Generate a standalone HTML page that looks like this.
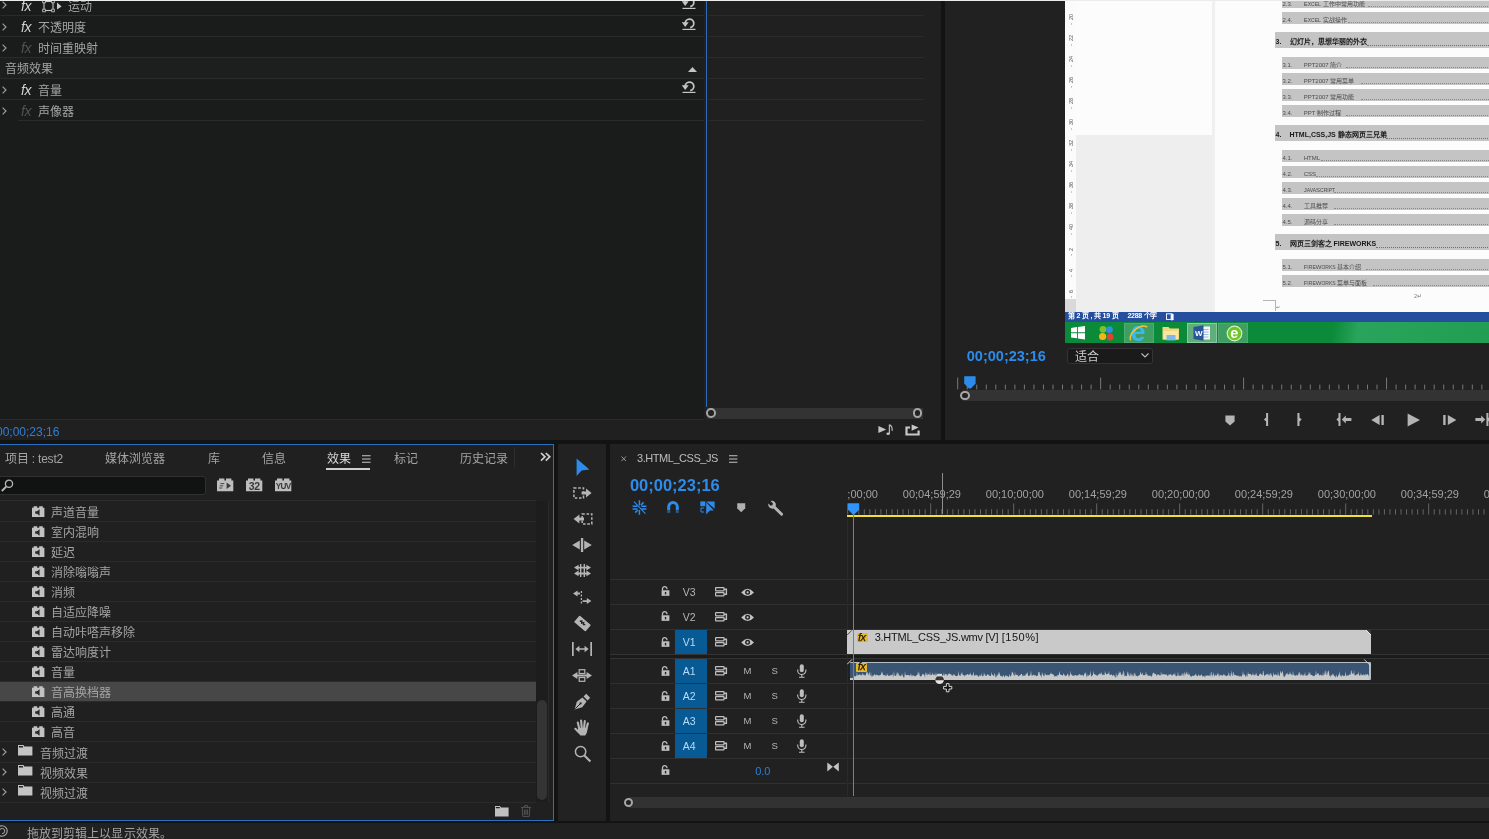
<!DOCTYPE html>
<html lang="zh-CN"><head><meta charset="utf-8"><title>Premiere Pro</title>
<style>
html,body{margin:0;padding:0}
body{width:1489px;height:839px;overflow:hidden;background:#111412;position:relative;font-family:"Liberation Sans",sans-serif}
body div,body svg{position:absolute;display:block}
.t{white-space:nowrap;font-family:"Liberation Sans",sans-serif}
.sc{font-size:84%;position:static}
#vid div,#vid svg{position:absolute}
</style></head><body><div id="root" style="left:0;top:0;width:1489px;height:839px;will-change:transform;overflow:hidden">
<div style="left:0px;top:0px;width:941px;height:440px;background:#202020;"></div>
<div style="left:0px;top:0px;width:704px;height:419px;background:#191c1a;"></div>
<div style="left:0px;top:58px;width:704px;height:20px;background:#1d1e1e;"></div>
<div style="left:0px;top:419px;width:941px;height:21px;background:#212021;"></div>
<div style="left:0px;top:419px;width:704px;height:1px;background:#2b2b2b;"></div>
<div style="left:0px;top:15px;width:704px;height:1px;background:#282b29;"></div>
<div style="left:708px;top:15px;width:216px;height:1px;background:#2b2b2b;"></div>
<div style="left:0px;top:36px;width:704px;height:1px;background:#282b29;"></div>
<div style="left:708px;top:36px;width:216px;height:1px;background:#2b2b2b;"></div>
<div style="left:0px;top:57px;width:704px;height:1px;background:#282b29;"></div>
<div style="left:708px;top:57px;width:216px;height:1px;background:#2b2b2b;"></div>
<div style="left:0px;top:78px;width:704px;height:1px;background:#282b29;"></div>
<div style="left:708px;top:78px;width:216px;height:1px;background:#2b2b2b;"></div>
<div style="left:0px;top:99px;width:704px;height:1px;background:#282b29;"></div>
<div style="left:708px;top:99px;width:216px;height:1px;background:#2b2b2b;"></div>
<div style="left:18px;top:120px;width:686px;height:1px;background:#282b29;"></div>
<div style="left:708px;top:120px;width:216px;height:1px;background:#2b2b2b;"></div>
<div style="left:706.2px;top:1px;width:1.2px;height:405.5px;background:#2c6cba;"></div>
<svg style="left:2.1px;top:1.0px;" width="6" height="8" viewBox="0 0 6 8"><polyline points="0.6,0.6 4,4 0.6,7.4" fill="none" stroke="#9c9c9c" stroke-width="1.2"/></svg>
<div class="t" style="left:21px;top:-4.5px;height:20px;line-height:20px;font-size:14px;font-style:italic;color:#cfcfcf;letter-spacing:-0.5px">fx</div>
<div class="t" style="left:68px;top:-3.5px;height:20px;line-height:20px;font-size:12px;color:#a4a4a4;">运动</div>
<svg style="left:42.4px;top:-0.2px;" width="22" height="14" viewBox="0 0 22 14"><rect x="2" y="1.5" width="9" height="9" fill="none" stroke="#c8c8c8" stroke-width="1.1"/><rect x="0.7" y="0.2" width="2.6" height="2.6" fill="#1a1d1b" stroke="#c8c8c8" stroke-width="0.8"/><rect x="9.7" y="0.2" width="2.6" height="2.6" fill="#1a1d1b" stroke="#c8c8c8" stroke-width="0.8"/><rect x="0.7" y="9.2" width="2.6" height="2.6" fill="#1a1d1b" stroke="#c8c8c8" stroke-width="0.8"/><rect x="9.7" y="9.2" width="2.6" height="2.6" fill="#1a1d1b" stroke="#c8c8c8" stroke-width="0.8"/><path d="M15 2.5 L19.6 6.5 L15 9.5 Z" fill="#c8c8c8"/></svg>
<svg style="left:2.1px;top:22.5px;" width="6" height="8" viewBox="0 0 6 8"><polyline points="0.6,0.6 4,4 0.6,7.4" fill="none" stroke="#9c9c9c" stroke-width="1.2"/></svg>
<div class="t" style="left:21px;top:17px;height:20px;line-height:20px;font-size:14px;font-style:italic;color:#cfcfcf;letter-spacing:-0.5px">fx</div>
<div class="t" style="left:38px;top:18px;height:20px;line-height:20px;font-size:12px;color:#a4a4a4;">不透明度</div>
<svg style="left:2.1px;top:43.5px;" width="6" height="8" viewBox="0 0 6 8"><polyline points="0.6,0.6 4,4 0.6,7.4" fill="none" stroke="#9c9c9c" stroke-width="1.2"/></svg>
<div class="t" style="left:21px;top:38px;height:20px;line-height:20px;font-size:14px;font-style:italic;color:#505251;letter-spacing:-0.5px">fx</div>
<div class="t" style="left:38px;top:39px;height:20px;line-height:20px;font-size:12px;color:#a4a4a4;">时间重映射</div>
<div class="t" style="left:5px;top:59px;height:20px;line-height:20px;font-size:12px;color:#a4a4a4;">音频效果</div>
<svg style="left:2.1px;top:85.5px;" width="6" height="8" viewBox="0 0 6 8"><polyline points="0.6,0.6 4,4 0.6,7.4" fill="none" stroke="#9c9c9c" stroke-width="1.2"/></svg>
<div class="t" style="left:21px;top:80px;height:20px;line-height:20px;font-size:14px;font-style:italic;color:#cfcfcf;letter-spacing:-0.5px">fx</div>
<div class="t" style="left:38px;top:81px;height:20px;line-height:20px;font-size:12px;color:#a4a4a4;">音量</div>
<svg style="left:2.1px;top:106.5px;" width="6" height="8" viewBox="0 0 6 8"><polyline points="0.6,0.6 4,4 0.6,7.4" fill="none" stroke="#9c9c9c" stroke-width="1.2"/></svg>
<div class="t" style="left:21px;top:101px;height:20px;line-height:20px;font-size:14px;font-style:italic;color:#505251;letter-spacing:-0.5px">fx</div>
<div class="t" style="left:38px;top:102px;height:20px;line-height:20px;font-size:12px;color:#a4a4a4;">声像器</div>
<svg style="left:682px;top:-3.5px;" width="14" height="13" viewBox="0 0 14 13"><path d="M3.2 5.2 A4.3 4.3 0 1 1 8.2 9.6" fill="none" stroke="#c4c4c4" stroke-width="1.75"/><path d="M-0.3 4.2 L6.7 4.2 L3.2 8.9 Z" fill="#c4c4c4"/><rect x="0.5" y="10.8" width="13" height="1.2" fill="#c4c4c4"/></svg>
<svg style="left:682px;top:17.5px;" width="14" height="13" viewBox="0 0 14 13"><path d="M3.2 5.2 A4.3 4.3 0 1 1 8.2 9.6" fill="none" stroke="#c4c4c4" stroke-width="1.75"/><path d="M-0.3 4.2 L6.7 4.2 L3.2 8.9 Z" fill="#c4c4c4"/><rect x="0.5" y="10.8" width="13" height="1.2" fill="#c4c4c4"/></svg>
<svg style="left:682px;top:80.5px;" width="14" height="13" viewBox="0 0 14 13"><path d="M3.2 5.2 A4.3 4.3 0 1 1 8.2 9.6" fill="none" stroke="#c4c4c4" stroke-width="1.75"/><path d="M-0.3 4.2 L6.7 4.2 L3.2 8.9 Z" fill="#c4c4c4"/><rect x="0.5" y="10.8" width="13" height="1.2" fill="#c4c4c4"/></svg>
<svg style="left:688px;top:66.5px;" width="9" height="5" viewBox="0 0 9 5"><path d="M0 5 L4.5 0 L9 5 Z" fill="#c4c4c4"/></svg>
<div style="left:707px;top:408px;width:216px;height:11px;background:#333333;"></div>
<div style="left:706.0px;top:408.40000000000003px;width:5.6px;height:5.6px;border:2.4px solid #a6a6a6;border-radius:50%;background:#222"></div>
<div style="left:912.8px;top:408.40000000000003px;width:5.6px;height:5.6px;border:2.4px solid #a6a6a6;border-radius:50%;background:#222"></div>
<div class="t" style="left:-4px;top:421.6px;height:20px;line-height:20px;font-size:12px;color:#2f7fd6;">00;00;23;16</div>
<svg style="left:877.5px;top:424px;" width="16" height="12" viewBox="0 0 16 12"><path d="M0.4 1.9 L8.2 5.5 L0.4 9.1 Z" fill="#c4c4c4"/><rect x="10.8" y="0.5" width="1.1" height="9.4" fill="#c4c4c4"/><path d="M11.6 0.8 Q14.6 2.4 14.1 6.9" fill="none" stroke="#c4c4c4" stroke-width="1.1"/><ellipse cx="10.1" cy="9.7" rx="1.7" ry="1.25" fill="#c4c4c4"/></svg>
<svg style="left:904.5px;top:423.5px;" width="16" height="13" viewBox="0 0 16 13"><path d="M5 3.5 H1.5 V10.5 H13.6 V6.4" fill="none" stroke="#c8c8c8" stroke-width="2.2"/><path d="M6.6 0.5 L13.6 3.6 L6.6 6.7 Z" fill="#c8c8c8"/></svg>
<div style="left:945px;top:0px;width:544px;height:440px;background:#212121;"></div>
<div id="vid" style="left:1065px;top:0;width:424px;height:343px;background:#fdfcfd;overflow:hidden">
<div style="left:0.0px;top:0px;width:11.3px;height:311px;background:#fbfbfb;"></div>
<div style="left:11.3px;top:135px;width:135.7px;height:176.5px;background:#eeeeee;"></div>
<div style="left:147.0px;top:0px;width:2.5px;height:311.5px;background:#f1f0f1;"></div>
<div style="left:0.0px;top:299px;width:11.3px;height:12.5px;background:#d9d9d9;"></div>
<div class="t" style="left:2px;top:12px;font-size:5.5px;line-height:8px;color:#555;transform:rotate(-90deg);transform-origin:4px 4px">20</div>
<div style="left:5.5px;top:22.5px;width:1px;height:2.5px;background:#c9c9c9;"></div>
<div class="t" style="left:2px;top:33px;font-size:5.5px;line-height:8px;color:#555;transform:rotate(-90deg);transform-origin:4px 4px">22</div>
<div style="left:5.5px;top:43.5px;width:1px;height:2.5px;background:#c9c9c9;"></div>
<div class="t" style="left:2px;top:54px;font-size:5.5px;line-height:8px;color:#555;transform:rotate(-90deg);transform-origin:4px 4px">24</div>
<div style="left:5.5px;top:64.5px;width:1px;height:2.5px;background:#c9c9c9;"></div>
<div class="t" style="left:2px;top:75px;font-size:5.5px;line-height:8px;color:#555;transform:rotate(-90deg);transform-origin:4px 4px">26</div>
<div style="left:5.5px;top:85.5px;width:1px;height:2.5px;background:#c9c9c9;"></div>
<div class="t" style="left:2px;top:96px;font-size:5.5px;line-height:8px;color:#555;transform:rotate(-90deg);transform-origin:4px 4px">28</div>
<div style="left:5.5px;top:106.5px;width:1px;height:2.5px;background:#c9c9c9;"></div>
<div class="t" style="left:2px;top:117px;font-size:5.5px;line-height:8px;color:#555;transform:rotate(-90deg);transform-origin:4px 4px">30</div>
<div style="left:5.5px;top:127.5px;width:1px;height:2.5px;background:#c9c9c9;"></div>
<div class="t" style="left:2px;top:138px;font-size:5.5px;line-height:8px;color:#555;transform:rotate(-90deg);transform-origin:4px 4px">32</div>
<div style="left:5.5px;top:148.5px;width:1px;height:2.5px;background:#c9c9c9;"></div>
<div class="t" style="left:2px;top:159px;font-size:5.5px;line-height:8px;color:#555;transform:rotate(-90deg);transform-origin:4px 4px">34</div>
<div style="left:5.5px;top:169.5px;width:1px;height:2.5px;background:#c9c9c9;"></div>
<div class="t" style="left:2px;top:180px;font-size:5.5px;line-height:8px;color:#555;transform:rotate(-90deg);transform-origin:4px 4px">36</div>
<div style="left:5.5px;top:190.5px;width:1px;height:2.5px;background:#c9c9c9;"></div>
<div class="t" style="left:2px;top:201px;font-size:5.5px;line-height:8px;color:#555;transform:rotate(-90deg);transform-origin:4px 4px">38</div>
<div style="left:5.5px;top:211.5px;width:1px;height:2.5px;background:#c9c9c9;"></div>
<div class="t" style="left:2px;top:222px;font-size:5.5px;line-height:8px;color:#555;transform:rotate(-90deg);transform-origin:4px 4px">40</div>
<div style="left:5.5px;top:232.5px;width:1px;height:2.5px;background:#c9c9c9;"></div>
<div class="t" style="left:2px;top:243px;font-size:5.5px;line-height:8px;color:#555;transform:rotate(-90deg);transform-origin:4px 4px">2</div>
<div style="left:5.5px;top:253.5px;width:1px;height:2.5px;background:#c9c9c9;"></div>
<div class="t" style="left:2px;top:264px;font-size:5.5px;line-height:8px;color:#555;transform:rotate(-90deg);transform-origin:4px 4px">4</div>
<div style="left:5.5px;top:274.5px;width:1px;height:2.5px;background:#c9c9c9;"></div>
<div class="t" style="left:2px;top:285px;font-size:5.5px;line-height:8px;color:#555;transform:rotate(-90deg);transform-origin:4px 4px">6</div>
<div style="left:5.5px;top:295.5px;width:1px;height:2.5px;background:#c9c9c9;"></div>
<div style="left:217.0px;top:-4px;width:215px;height:12px;background:#c5c4c5;"></div>
<div class="t" style="left:217.5px;top:-2.3px;height:12px;line-height:12px;font-size:6px;color:#4c4c4c;">2.3.</div>
<div class="t" style="left:238.7px;top:-2.3px;height:12px;line-height:12px;font-size:6px;color:#4c4c4c;">E<span class="sc">XCEL</span> 工作中常用功能</div>
<div style="left:302.8px;top:6px;width:210px;height:0px;background:transparent;border-top:1px dotted #8c8c8c"></div>
<div style="left:217.0px;top:12px;width:215px;height:12px;background:#c5c4c5;"></div>
<div class="t" style="left:217.5px;top:13.7px;height:12px;line-height:12px;font-size:6px;color:#4c4c4c;">2.4.</div>
<div class="t" style="left:238.7px;top:13.7px;height:12px;line-height:12px;font-size:6px;color:#4c4c4c;">E<span class="sc">XCEL</span> 实战操作</div>
<div style="left:283.4px;top:22px;width:210px;height:0px;background:transparent;border-top:1px dotted #8c8c8c"></div>
<div style="left:210.0px;top:31.7px;width:220px;height:16.6px;background:#c5c4c5;"></div>
<div class="t" style="left:210.5px;top:36.3px;height:12px;line-height:12px;font-size:7px;color:#1a1a1a;font-weight:bold">3.</div>
<div class="t" style="left:224.5px;top:36.3px;height:12px;line-height:12px;font-size:7px;color:#1a1a1a;font-weight:bold">幻灯片，思想华丽的外衣</div>
<div style="left:301.5px;top:45.3px;width:210px;height:0px;background:transparent;border-top:1px dotted #707070"></div>
<div style="left:217.0px;top:57px;width:215px;height:12px;background:#c5c4c5;"></div>
<div class="t" style="left:217.5px;top:58.7px;height:12px;line-height:12px;font-size:6px;color:#4c4c4c;">3.1.</div>
<div class="t" style="left:238.7px;top:58.7px;height:12px;line-height:12px;font-size:6px;color:#4c4c4c;">PPT2007 简介</div>
<div style="left:281.2px;top:67px;width:210px;height:0px;background:transparent;border-top:1px dotted #8c8c8c"></div>
<div style="left:217.0px;top:73px;width:215px;height:12px;background:#c5c4c5;"></div>
<div class="t" style="left:217.5px;top:74.7px;height:12px;line-height:12px;font-size:6px;color:#4c4c4c;">3.2.</div>
<div class="t" style="left:238.7px;top:74.7px;height:12px;line-height:12px;font-size:6px;color:#4c4c4c;">PPT2007 常用菜单</div>
<div style="left:296.4px;top:83px;width:210px;height:0px;background:transparent;border-top:1px dotted #8c8c8c"></div>
<div style="left:217.0px;top:89.3px;width:215px;height:12px;background:#c5c4c5;"></div>
<div class="t" style="left:217.5px;top:91.0px;height:12px;line-height:12px;font-size:6px;color:#4c4c4c;">3.3.</div>
<div class="t" style="left:238.7px;top:91.0px;height:12px;line-height:12px;font-size:6px;color:#4c4c4c;">PPT2007 常用功能</div>
<div style="left:296.4px;top:99.3px;width:210px;height:0px;background:transparent;border-top:1px dotted #8c8c8c"></div>
<div style="left:217.0px;top:105px;width:215px;height:12px;background:#c5c4c5;"></div>
<div class="t" style="left:217.5px;top:106.7px;height:12px;line-height:12px;font-size:6px;color:#4c4c4c;">3.4.</div>
<div class="t" style="left:238.7px;top:106.7px;height:12px;line-height:12px;font-size:6px;color:#4c4c4c;">PPT 制作过程</div>
<div style="left:281.2px;top:115px;width:210px;height:0px;background:transparent;border-top:1px dotted #8c8c8c"></div>
<div style="left:210.0px;top:124.5px;width:220px;height:16.6px;background:#c5c4c5;"></div>
<div class="t" style="left:210.5px;top:129.1px;height:12px;line-height:12px;font-size:7px;color:#1a1a1a;font-weight:bold">4.</div>
<div class="t" style="left:224.5px;top:129.1px;height:12px;line-height:12px;font-size:7px;color:#1a1a1a;font-weight:bold">HTML,CSS,JS 静态网页三兄弟</div>
<div style="left:320.5px;top:138.1px;width:210px;height:0px;background:transparent;border-top:1px dotted #707070"></div>
<div style="left:217.0px;top:150px;width:215px;height:12px;background:#c5c4c5;"></div>
<div class="t" style="left:217.5px;top:151.7px;height:12px;line-height:12px;font-size:6px;color:#4c4c4c;">4.1.</div>
<div class="t" style="left:238.7px;top:151.7px;height:12px;line-height:12px;font-size:6px;color:#4c4c4c;">HTML</div>
<div style="left:256.4px;top:160px;width:210px;height:0px;background:transparent;border-top:1px dotted #8c8c8c"></div>
<div style="left:217.0px;top:166px;width:215px;height:12px;background:#c5c4c5;"></div>
<div class="t" style="left:217.5px;top:167.7px;height:12px;line-height:12px;font-size:6px;color:#4c4c4c;">4.2.</div>
<div class="t" style="left:238.7px;top:167.7px;height:12px;line-height:12px;font-size:6px;color:#4c4c4c;">CSS</div>
<div style="left:251.0px;top:176px;width:210px;height:0px;background:transparent;border-top:1px dotted #8c8c8c"></div>
<div style="left:217.0px;top:182.4px;width:215px;height:12px;background:#c5c4c5;"></div>
<div class="t" style="left:217.5px;top:184.1px;height:12px;line-height:12px;font-size:6px;color:#4c4c4c;">4.3.</div>
<div class="t" style="left:238.7px;top:184.1px;height:12px;line-height:12px;font-size:6px;color:#4c4c4c;">J<span class="sc">AVA</span>S<span class="sc">CRIPT</span></div>
<div style="left:269.4px;top:192.4px;width:210px;height:0px;background:transparent;border-top:1px dotted #8c8c8c"></div>
<div style="left:217.0px;top:198.3px;width:215px;height:12px;background:#c5c4c5;"></div>
<div class="t" style="left:217.5px;top:200.0px;height:12px;line-height:12px;font-size:6px;color:#4c4c4c;">4.4.</div>
<div class="t" style="left:238.7px;top:200.0px;height:12px;line-height:12px;font-size:6px;color:#4c4c4c;">工具推荐</div>
<div style="left:269.4px;top:208.3px;width:210px;height:0px;background:transparent;border-top:1px dotted #8c8c8c"></div>
<div style="left:217.0px;top:214px;width:215px;height:12px;background:#c5c4c5;"></div>
<div class="t" style="left:217.5px;top:215.7px;height:12px;line-height:12px;font-size:6px;color:#4c4c4c;">4.5.</div>
<div class="t" style="left:238.7px;top:215.7px;height:12px;line-height:12px;font-size:6px;color:#4c4c4c;">源码分享</div>
<div style="left:269.4px;top:224px;width:210px;height:0px;background:transparent;border-top:1px dotted #8c8c8c"></div>
<div style="left:210.0px;top:233.7px;width:220px;height:16.6px;background:#c5c4c5;"></div>
<div class="t" style="left:210.5px;top:238.29999999999998px;height:12px;line-height:12px;font-size:7px;color:#1a1a1a;font-weight:bold">5.</div>
<div class="t" style="left:224.5px;top:238.29999999999998px;height:12px;line-height:12px;font-size:7px;color:#1a1a1a;font-weight:bold">网页三剑客之 FIREWORKS</div>
<div style="left:310.5px;top:247.29999999999998px;width:210px;height:0px;background:transparent;border-top:1px dotted #707070"></div>
<div style="left:217.0px;top:259px;width:215px;height:12px;background:#c5c4c5;"></div>
<div class="t" style="left:217.5px;top:260.7px;height:12px;line-height:12px;font-size:6px;color:#4c4c4c;">5.1.</div>
<div class="t" style="left:238.7px;top:260.7px;height:12px;line-height:12px;font-size:6px;color:#4c4c4c;">F<span class="sc">IRE</span>W<span class="sc">ORKS</span> 基本介绍</div>
<div style="left:300.7px;top:269px;width:210px;height:0px;background:transparent;border-top:1px dotted #8c8c8c"></div>
<div style="left:217.0px;top:275px;width:215px;height:12px;background:#c5c4c5;"></div>
<div class="t" style="left:217.5px;top:276.7px;height:12px;line-height:12px;font-size:6px;color:#4c4c4c;">5.2.</div>
<div class="t" style="left:238.7px;top:276.7px;height:12px;line-height:12px;font-size:6px;color:#4c4c4c;">F<span class="sc">IRE</span>W<span class="sc">ORKS</span> 菜单与面板</div>
<div style="left:308.2px;top:285px;width:210px;height:0px;background:transparent;border-top:1px dotted #8c8c8c"></div>
<div class="t" style="left:349.0px;top:292px;height:8px;line-height:8px;font-size:5.5px;color:#777;">2↵</div>
<div style="left:198.0px;top:299.5px;width:12px;height:0.8px;background:#b5b5b5;"></div>
<div style="left:209.5px;top:299.5px;width:0.8px;height:11px;background:#b5b5b5;"></div>
<div class="t" style="left:211.0px;top:303px;height:8px;line-height:8px;font-size:5px;color:#777;">↵</div>
<div style="left:0.0px;top:311.5px;width:424px;height:11px;background:#254e9e;"></div>
<div class="t" style="left:3.0px;top:310.4px;height:11px;line-height:11px;font-size:7px;color:#ffffff;font-weight:bold;letter-spacing:-0.2px">第 2 页 , 共 19 页</div>
<div class="t" style="left:62.5px;top:310.4px;height:11px;line-height:11px;font-size:7px;color:#ffffff;font-weight:bold;letter-spacing:-0.3px">2288 个字</div>
<svg style="left:100.5px;top:312.6px" width="9" height="8" viewBox="0 0 9 8"><rect x="0.5" y="0.8" width="4.6" height="5.6" fill="none" stroke="#fff" stroke-width="0.9"/><path d="M5.2 0.2 L7.6 1 L7.6 7 L5.2 7.6 Z" fill="#fff"/></svg>
<div style="left:0.0px;top:322.3px;width:424px;height:20.7px;background:#0b8b3a;background:linear-gradient(100deg,#0b8b3a 0%,#0b8b3a 63%,#2aa45c 69%,#219e53 100%)"></div>
<div style="left:58.8px;top:323px;width:30px;height:19.5px;background:#3f9e62;box-shadow:inset 0 0 0 0.6px #5db47e"></div>
<div style="left:121.8px;top:323px;width:30.2px;height:19.5px;background:#5fae7c;box-shadow:inset 0 0 0 0.7px #9ed3b2"></div>
<div style="left:153.0px;top:323px;width:30.4px;height:19.5px;background:#3f9e62;box-shadow:inset 0 0 0 0.6px #5db47e"></div>
<svg style="left:6px;top:326px" width="14" height="14" viewBox="0 0 14 14"><path d="M0 2 L6 1 L6 6.3 L0 6.3 Z M6.9 0.9 L14 0 L14 6.3 L6.9 6.3 Z M0 7.2 L6 7.2 L6 12.3 L0 11.4 Z M6.9 7.2 L14 7.2 L14 13.5 L6.9 12.5 Z" fill="#fff"/></svg>
<svg style="left:32.5px;top:324.5px" width="17" height="17" viewBox="0 0 17 17"><circle cx="5" cy="4.3" r="3.4" fill="#7cc12c"/><circle cx="11.5" cy="4.6" r="3.4" fill="#2d8fe0"/><circle cx="4.6" cy="11.5" r="3.6" fill="#f1b718"/><circle cx="12" cy="12" r="3.4" fill="#e2432f"/></svg>
<svg style="left:64px;top:323.5px" width="20" height="19" viewBox="0 0 20 19"><text x="1.6" y="17.2" font-family="Liberation Sans" font-weight="bold" font-size="27" fill="#3bb8f2">e</text><path d="M1.6 16.4 C-0.6 9 11.5 -1.2 18.2 3.2" fill="none" stroke="#f2c532" stroke-width="1.5"/></svg>
<svg style="left:97px;top:325px" width="18" height="16" viewBox="0 0 18 16"><path d="M0.5 2 L6.5 2 L8 3.6 L17 3.6 L17 14.5 L0.5 14.5 Z" fill="#f3d77a"/><rect x="1.5" y="6" width="14.5" height="8.5" fill="#f8e7a5"/><rect x="4.5" y="10" width="9" height="5.4" fill="#7db8e8"/></svg>
<svg style="left:128px;top:325px" width="18" height="16" viewBox="0 0 18 16"><rect x="7" y="1.5" width="10" height="13" fill="#f3f6fb"/><path d="M9.5 4.5 H15.5 M9.5 7 H15.5 M9.5 9.5 H15.5 M9.5 12 H15.5" stroke="#9bb4dc" stroke-width="0.9"/><path d="M0.5 2 L10.5 0.3 L10.5 15.7 L0.5 14 Z" fill="#2a5699"/><text x="2.1" y="11.3" font-family="Liberation Sans" font-weight="bold" font-size="8" fill="#fff">W</text></svg>
<svg style="left:160.5px;top:324.5px" width="17" height="17" viewBox="0 0 17 17"><circle cx="8.5" cy="8.5" r="7.3" fill="#6fc52b" stroke="#d6f2bb" stroke-width="1.2"/><text x="4.3" y="13" font-family="Liberation Sans" font-weight="bold" font-size="14.5" fill="#fff">e</text></svg>
</div>
<div class="t" style="left:966.8px;top:345.8px;height:20px;line-height:20px;font-size:14.5px;color:#2d8ceb;font-weight:bold">00;00;23;16</div>
<div style="left:1067.3px;top:347.6px;width:86px;height:16px;background:#1a1a1a;border:1px solid #343434;border-radius:3px;box-sizing:border-box"></div>
<div class="t" style="left:1075px;top:348.4px;height:18px;line-height:18px;font-size:12px;color:#cfcfcf;">适合</div>
<svg style="left:1140.5px;top:353px;" width="8" height="5" viewBox="0 0 8 5"><polyline points="0.5,0.5 4,4 7.5,0.5" fill="none" stroke="#bdbdbd" stroke-width="1.1"/></svg>
<svg style="left:945px;top:370px;" width="544" height="20" viewBox="0 0 544 20"><path d="M12.70 7.6V19.4M22.23 14.6V19.4M31.76 14.6V19.4M41.29 14.6V19.4M50.82 14.6V19.4M60.35 14.6V19.4M69.88 14.6V19.4M79.41 14.6V19.4M88.94 14.6V19.4M98.47 14.6V19.4M108.00 14.6V19.4M117.53 14.6V19.4M127.06 14.6V19.4M136.59 14.6V19.4M146.12 14.6V19.4M155.65 7.6V19.4M165.18 14.6V19.4M174.71 14.6V19.4M184.24 14.6V19.4M193.77 14.6V19.4M203.30 14.6V19.4M212.83 14.6V19.4M222.36 14.6V19.4M231.89 14.6V19.4M241.42 14.6V19.4M250.95 14.6V19.4M260.48 14.6V19.4M270.01 14.6V19.4M279.54 14.6V19.4M289.07 14.6V19.4M298.60 7.6V19.4M308.13 14.6V19.4M317.66 14.6V19.4M327.19 14.6V19.4M336.72 14.6V19.4M346.25 14.6V19.4M355.78 14.6V19.4M365.31 14.6V19.4M374.84 14.6V19.4M384.37 14.6V19.4M393.90 14.6V19.4M403.43 14.6V19.4M412.96 14.6V19.4M422.49 14.6V19.4M432.02 14.6V19.4M441.55 7.6V19.4M451.08 14.6V19.4M460.61 14.6V19.4M470.14 14.6V19.4M479.67 14.6V19.4M489.20 14.6V19.4M498.73 14.6V19.4M508.26 14.6V19.4M517.79 14.6V19.4M527.32 14.6V19.4M536.85 14.6V19.4" stroke="#787878" stroke-width="1" fill="none"/></svg>
<div style="left:963px;top:390.4px;width:526px;height:10.2px;background:#333333;"></div>
<div style="left:960.2px;top:390.6px;width:5.6px;height:5.6px;border:2.4px solid #a6a6a6;border-radius:50%;background:#222"></div>
<svg style="left:963.6px;top:376.3px;" width="12" height="13" viewBox="0 0 12 13"><path d="M0.2 0.3 L11.6 0.3 L11.6 7.6 L6.9 12.4 L4.9 12.4 L0.2 7.6 Z" fill="#2d8ceb"/></svg>
<svg style="left:1224.5px;top:414.5px;" width="10" height="11" viewBox="0 0 10 11"><path d="M0.4 0.4 L9.6 0.4 L9.6 6.6 L5 10.5 L0.4 6.6 Z" fill="#b4b4b4"/></svg>
<svg style="left:1263px;top:413px;" width="8" height="14" viewBox="0 0 8 14"><path d="M3.1 0 H5.1 V13 H3.1 V8.6 L0.9 6.5 L3.1 4.4 Z" fill="#b4b4b4"/></svg>
<svg style="left:1294.5px;top:413px;" width="8" height="14" viewBox="0 0 8 14"><path d="M2.4 0 H4.5 V4.4 L6.7 6.5 L4.5 8.6 V13 H2.4 Z" fill="#b4b4b4"/></svg>
<svg style="left:1335.5px;top:413px;" width="17" height="14" viewBox="0 0 17 14"><path d="M2.5 0 H4.5 V13 H2.5 V8.6 L0.4 6.5 L2.5 4.4 Z" fill="#b4b4b4"/><path d="M5.8 6.5 L9.8 2.6 L9.8 5.1 L15.4 5.1 L15.4 7.9 L9.8 7.9 L9.8 10.4 Z" fill="#b4b4b4"/></svg>
<svg style="left:1371px;top:414px;" width="14" height="12" viewBox="0 0 14 12"><path d="M0.3 6 L8.6 1 L8.6 11 Z" fill="#b4b4b4"/><rect x="10.4" y="1" width="2.4" height="10" fill="#b4b4b4"/></svg>
<svg style="left:1406.5px;top:413px;" width="14" height="14" viewBox="0 0 14 14"><path d="M0.6 0.6 L13 7 L0.6 13.4 Z" fill="#b4b4b4"/></svg>
<svg style="left:1442.5px;top:414px;" width="14" height="12" viewBox="0 0 14 12"><rect x="0.2" y="1" width="2.4" height="10" fill="#b4b4b4"/><path d="M13.4 6 L4.8 1 L4.8 11 Z" fill="#b4b4b4"/></svg>
<svg style="left:1475px;top:413px;" width="17" height="14" viewBox="0 0 17 14"><path d="M11.4 0 H13.4 V4.4 L15.5 6.5 L13.4 8.6 V13 H11.4 Z" fill="#b4b4b4"/><path d="M10.2 6.5 L6.2 2.6 L6.2 5.1 L0.4 5.1 L0.4 7.9 L6.2 7.9 L6.2 10.4 Z" fill="#b4b4b4"/></svg>
<div style="left:0px;top:444px;width:554.2px;height:376.8px;background:#202020;box-sizing:border-box;border:1.5px solid #2b6fc0;border-left:none"></div>
<div class="t" style="left:5px;top:448.5px;height:20px;line-height:20px;font-size:12px;color:#a4a4a4;letter-spacing:-0.2px">项目 : test2</div>
<div class="t" style="left:105px;top:448.5px;height:20px;line-height:20px;font-size:12px;color:#a4a4a4;">媒体浏览器</div>
<div class="t" style="left:207.5px;top:448.5px;height:20px;line-height:20px;font-size:12px;color:#a4a4a4;">库</div>
<div class="t" style="left:261.5px;top:448.5px;height:20px;line-height:20px;font-size:12px;color:#a4a4a4;">信息</div>
<div class="t" style="left:327.3px;top:448.5px;height:20px;line-height:20px;font-size:12px;color:#d8d8d8;">效果</div>
<div class="t" style="left:393.8px;top:448.5px;height:20px;line-height:20px;font-size:12px;color:#a4a4a4;">标记</div>
<div class="t" style="left:460px;top:448.5px;height:20px;line-height:20px;font-size:12px;color:#a4a4a4;">历史记录</div>
<svg style="left:361.5px;top:454.5px;" width="9" height="8" viewBox="0 0 9 8"><path d="M0 0.8 H8.6 M0 4 H8.6 M0 7.2 H8.6" stroke="#c8c8c8" stroke-width="1.1"/></svg>
<div style="left:326px;top:467.6px;width:44px;height:2px;background:#cfcfcf;"></div>
<div style="left:514px;top:447px;width:1px;height:20px;background:#2e2e2e;"></div>
<svg style="left:539.5px;top:451.8px;" width="11" height="10" viewBox="0 0 11 10"><path d="M1 1 L5 4.8 L1 8.6 M5.8 1 L9.8 4.8 L5.8 8.6" fill="none" stroke="#d0d0d0" stroke-width="1.7"/></svg>
<div style="left:-2px;top:475.5px;width:207.5px;height:19px;background:#111312;border:1px solid #303030;border-radius:3px;box-sizing:border-box"></div>
<svg style="left:1px;top:479px;" width="13" height="13" viewBox="0 0 13 13"><circle cx="8" cy="4.8" r="3.6" fill="none" stroke="#b8b8b8" stroke-width="1.3"/><path d="M5.2 7.6 L0.8 12" stroke="#b8b8b8" stroke-width="1.9"/></svg>
<svg style="left:216.8px;top:477.6px;" width="17" height="14" viewBox="0 0 17 14"><path d="M0 2.6 L2 2.6 L2 0.4 L7.4 0.4 L7.4 2.6 L9 2.6 L9 0.4 L14.4 0.4 L14.4 2.6 L16.3 2.6 L16.3 13.3 L0 13.3 Z" fill="#bdbdbd"/><path d="M9.6 4.6 L14 7.8 L9.6 11 Z" fill="#3a3a3a"/><path d="M3.4 5.6 H7.2 M2.8 7.8 H6.2 M2.2 10 H5.2" stroke="#3a3a3a" stroke-width="0.9"/></svg>
<svg style="left:246px;top:477.6px;" width="17" height="14" viewBox="0 0 17 14"><path d="M0 2.6 L2 2.6 L2 0.4 L7.4 0.4 L7.4 2.6 L9 2.6 L9 0.4 L14.4 0.4 L14.4 2.6 L16.3 2.6 L16.3 13.3 L0 13.3 Z" fill="#bdbdbd"/><text x="8.2" y="11.6" text-anchor="middle" font-family="Liberation Sans" font-size="10.5" font-weight="bold" fill="#3a3a3a" letter-spacing="-0.3">32</text></svg>
<svg style="left:274.9px;top:477.6px;" width="17" height="14" viewBox="0 0 17 14"><path d="M0 2.6 L2 2.6 L2 0.4 L7.4 0.4 L7.4 2.6 L9 2.6 L9 0.4 L14.4 0.4 L14.4 2.6 L16.3 2.6 L16.3 13.3 L0 13.3 Z" fill="#bdbdbd"/><text x="8.2" y="11.4" text-anchor="middle" font-family="Liberation Sans" font-size="8.2" font-weight="bold" fill="#3a3a3a" letter-spacing="-0.7">YUV</text></svg>
<div style="left:0px;top:499.5px;width:536px;height:1px;background:#2c2c2c;"></div>
<div style="left:0px;top:521px;width:536px;height:1px;background:#2b2b2b;"></div>
<svg style="left:31.8px;top:506px;" width="13" height="11" viewBox="0 0 13 11"><path d="M0 1.8 L1.6 1.8 L1.6 0.2 L5.2 0.2 L5.2 1.8 L7.2 1.8 L7.2 0.2 L10.8 0.2 L10.8 1.8 L12.4 1.8 L12.4 11 L0 11 Z" fill="#c2c2c2"/><path d="M3.2 5.3 L5 5.3 L7.6 3.3 L7.6 9.8 L5 7.8 L3.2 7.8 Z" fill="#2a2a2a"/></svg>
<div class="t" style="left:50.5px;top:502.5px;height:20px;line-height:20px;font-size:12px;color:#a4a4a4;">声道音量</div>
<div style="left:0px;top:541px;width:536px;height:1px;background:#2b2b2b;"></div>
<svg style="left:31.8px;top:526px;" width="13" height="11" viewBox="0 0 13 11"><path d="M0 1.8 L1.6 1.8 L1.6 0.2 L5.2 0.2 L5.2 1.8 L7.2 1.8 L7.2 0.2 L10.8 0.2 L10.8 1.8 L12.4 1.8 L12.4 11 L0 11 Z" fill="#c2c2c2"/><path d="M3.2 5.3 L5 5.3 L7.6 3.3 L7.6 9.8 L5 7.8 L3.2 7.8 Z" fill="#2a2a2a"/></svg>
<div class="t" style="left:50.5px;top:522.5px;height:20px;line-height:20px;font-size:12px;color:#a4a4a4;">室内混响</div>
<div style="left:0px;top:561px;width:536px;height:1px;background:#2b2b2b;"></div>
<svg style="left:31.8px;top:546px;" width="13" height="11" viewBox="0 0 13 11"><path d="M0 1.8 L1.6 1.8 L1.6 0.2 L5.2 0.2 L5.2 1.8 L7.2 1.8 L7.2 0.2 L10.8 0.2 L10.8 1.8 L12.4 1.8 L12.4 11 L0 11 Z" fill="#c2c2c2"/><path d="M3.2 5.3 L5 5.3 L7.6 3.3 L7.6 9.8 L5 7.8 L3.2 7.8 Z" fill="#2a2a2a"/></svg>
<div class="t" style="left:50.5px;top:542.5px;height:20px;line-height:20px;font-size:12px;color:#a4a4a4;">延迟</div>
<div style="left:0px;top:581px;width:536px;height:1px;background:#2b2b2b;"></div>
<svg style="left:31.8px;top:566px;" width="13" height="11" viewBox="0 0 13 11"><path d="M0 1.8 L1.6 1.8 L1.6 0.2 L5.2 0.2 L5.2 1.8 L7.2 1.8 L7.2 0.2 L10.8 0.2 L10.8 1.8 L12.4 1.8 L12.4 11 L0 11 Z" fill="#c2c2c2"/><path d="M3.2 5.3 L5 5.3 L7.6 3.3 L7.6 9.8 L5 7.8 L3.2 7.8 Z" fill="#2a2a2a"/></svg>
<div class="t" style="left:50.5px;top:562.5px;height:20px;line-height:20px;font-size:12px;color:#a4a4a4;">消除嗡嗡声</div>
<div style="left:0px;top:601px;width:536px;height:1px;background:#2b2b2b;"></div>
<svg style="left:31.8px;top:586px;" width="13" height="11" viewBox="0 0 13 11"><path d="M0 1.8 L1.6 1.8 L1.6 0.2 L5.2 0.2 L5.2 1.8 L7.2 1.8 L7.2 0.2 L10.8 0.2 L10.8 1.8 L12.4 1.8 L12.4 11 L0 11 Z" fill="#c2c2c2"/><path d="M3.2 5.3 L5 5.3 L7.6 3.3 L7.6 9.8 L5 7.8 L3.2 7.8 Z" fill="#2a2a2a"/></svg>
<div class="t" style="left:50.5px;top:582.5px;height:20px;line-height:20px;font-size:12px;color:#a4a4a4;">消频</div>
<div style="left:0px;top:621px;width:536px;height:1px;background:#2b2b2b;"></div>
<svg style="left:31.8px;top:606px;" width="13" height="11" viewBox="0 0 13 11"><path d="M0 1.8 L1.6 1.8 L1.6 0.2 L5.2 0.2 L5.2 1.8 L7.2 1.8 L7.2 0.2 L10.8 0.2 L10.8 1.8 L12.4 1.8 L12.4 11 L0 11 Z" fill="#c2c2c2"/><path d="M3.2 5.3 L5 5.3 L7.6 3.3 L7.6 9.8 L5 7.8 L3.2 7.8 Z" fill="#2a2a2a"/></svg>
<div class="t" style="left:50.5px;top:602.5px;height:20px;line-height:20px;font-size:12px;color:#a4a4a4;">自适应降噪</div>
<div style="left:0px;top:641px;width:536px;height:1px;background:#2b2b2b;"></div>
<svg style="left:31.8px;top:626px;" width="13" height="11" viewBox="0 0 13 11"><path d="M0 1.8 L1.6 1.8 L1.6 0.2 L5.2 0.2 L5.2 1.8 L7.2 1.8 L7.2 0.2 L10.8 0.2 L10.8 1.8 L12.4 1.8 L12.4 11 L0 11 Z" fill="#c2c2c2"/><path d="M3.2 5.3 L5 5.3 L7.6 3.3 L7.6 9.8 L5 7.8 L3.2 7.8 Z" fill="#2a2a2a"/></svg>
<div class="t" style="left:50.5px;top:622.5px;height:20px;line-height:20px;font-size:12px;color:#a4a4a4;">自动咔嗒声移除</div>
<div style="left:0px;top:661px;width:536px;height:1px;background:#2b2b2b;"></div>
<svg style="left:31.8px;top:646px;" width="13" height="11" viewBox="0 0 13 11"><path d="M0 1.8 L1.6 1.8 L1.6 0.2 L5.2 0.2 L5.2 1.8 L7.2 1.8 L7.2 0.2 L10.8 0.2 L10.8 1.8 L12.4 1.8 L12.4 11 L0 11 Z" fill="#c2c2c2"/><path d="M3.2 5.3 L5 5.3 L7.6 3.3 L7.6 9.8 L5 7.8 L3.2 7.8 Z" fill="#2a2a2a"/></svg>
<div class="t" style="left:50.5px;top:642.5px;height:20px;line-height:20px;font-size:12px;color:#a4a4a4;">雷达响度计</div>
<div style="left:0px;top:681px;width:536px;height:1px;background:#2b2b2b;"></div>
<svg style="left:31.8px;top:666px;" width="13" height="11" viewBox="0 0 13 11"><path d="M0 1.8 L1.6 1.8 L1.6 0.2 L5.2 0.2 L5.2 1.8 L7.2 1.8 L7.2 0.2 L10.8 0.2 L10.8 1.8 L12.4 1.8 L12.4 11 L0 11 Z" fill="#c2c2c2"/><path d="M3.2 5.3 L5 5.3 L7.6 3.3 L7.6 9.8 L5 7.8 L3.2 7.8 Z" fill="#2a2a2a"/></svg>
<div class="t" style="left:50.5px;top:662.5px;height:20px;line-height:20px;font-size:12px;color:#a4a4a4;">音量</div>
<div style="left:0px;top:682px;width:536px;height:19.5px;background:#464746;"></div>
<div style="left:0px;top:701px;width:536px;height:1px;background:#2b2b2b;"></div>
<svg style="left:31.8px;top:686px;" width="13" height="11" viewBox="0 0 13 11"><path d="M0 1.8 L1.6 1.8 L1.6 0.2 L5.2 0.2 L5.2 1.8 L7.2 1.8 L7.2 0.2 L10.8 0.2 L10.8 1.8 L12.4 1.8 L12.4 11 L0 11 Z" fill="#c2c2c2"/><path d="M3.2 5.3 L5 5.3 L7.6 3.3 L7.6 9.8 L5 7.8 L3.2 7.8 Z" fill="#2a2a2a"/></svg>
<div class="t" style="left:50.5px;top:682.5px;height:20px;line-height:20px;font-size:12px;color:#a4a4a4;">音高换档器</div>
<div style="left:0px;top:721px;width:536px;height:1px;background:#2b2b2b;"></div>
<svg style="left:31.8px;top:706px;" width="13" height="11" viewBox="0 0 13 11"><path d="M0 1.8 L1.6 1.8 L1.6 0.2 L5.2 0.2 L5.2 1.8 L7.2 1.8 L7.2 0.2 L10.8 0.2 L10.8 1.8 L12.4 1.8 L12.4 11 L0 11 Z" fill="#c2c2c2"/><path d="M3.2 5.3 L5 5.3 L7.6 3.3 L7.6 9.8 L5 7.8 L3.2 7.8 Z" fill="#2a2a2a"/></svg>
<div class="t" style="left:50.5px;top:702.5px;height:20px;line-height:20px;font-size:12px;color:#a4a4a4;">高通</div>
<div style="left:0px;top:741px;width:536px;height:1px;background:#2b2b2b;"></div>
<svg style="left:31.8px;top:726px;" width="13" height="11" viewBox="0 0 13 11"><path d="M0 1.8 L1.6 1.8 L1.6 0.2 L5.2 0.2 L5.2 1.8 L7.2 1.8 L7.2 0.2 L10.8 0.2 L10.8 1.8 L12.4 1.8 L12.4 11 L0 11 Z" fill="#c2c2c2"/><path d="M3.2 5.3 L5 5.3 L7.6 3.3 L7.6 9.8 L5 7.8 L3.2 7.8 Z" fill="#2a2a2a"/></svg>
<div class="t" style="left:50.5px;top:722.5px;height:20px;line-height:20px;font-size:12px;color:#a4a4a4;">高音</div>
<div style="left:0px;top:761.5px;width:536px;height:1px;background:#2b2b2b;"></div>
<svg style="left:1.5px;top:748.0px;" width="6" height="8" viewBox="0 0 6 8"><polyline points="0.6,0.6 4,4 0.6,7.4" fill="none" stroke="#9c9c9c" stroke-width="1.2"/></svg>
<svg style="left:18px;top:745.1px;" width="15" height="11" viewBox="0 0 15 11"><path d="M0 0 L5.4 0 L6.4 1.6 L14.4 1.6 L14.4 10.6 L0 10.6 Z M0.9 1 L0.9 2.4 L5.2 2.4 L4.7 1 Z" fill="#c4c4c4" fill-rule="evenodd"/></svg>
<div class="t" style="left:40px;top:743.5px;height:20px;line-height:20px;font-size:12px;color:#a4a4a4;">音频过渡</div>
<div style="left:0px;top:781.5px;width:536px;height:1px;background:#2b2b2b;"></div>
<svg style="left:1.5px;top:768.0px;" width="6" height="8" viewBox="0 0 6 8"><polyline points="0.6,0.6 4,4 0.6,7.4" fill="none" stroke="#9c9c9c" stroke-width="1.2"/></svg>
<svg style="left:18px;top:765.1px;" width="15" height="11" viewBox="0 0 15 11"><path d="M0 0 L5.4 0 L6.4 1.6 L14.4 1.6 L14.4 10.6 L0 10.6 Z M0.9 1 L0.9 2.4 L5.2 2.4 L4.7 1 Z" fill="#c4c4c4" fill-rule="evenodd"/></svg>
<div class="t" style="left:40px;top:763.5px;height:20px;line-height:20px;font-size:12px;color:#a4a4a4;">视频效果</div>
<div style="left:0px;top:801.5px;width:536px;height:1px;background:#2b2b2b;"></div>
<svg style="left:1.5px;top:788.0px;" width="6" height="8" viewBox="0 0 6 8"><polyline points="0.6,0.6 4,4 0.6,7.4" fill="none" stroke="#9c9c9c" stroke-width="1.2"/></svg>
<svg style="left:18px;top:785.1px;" width="15" height="11" viewBox="0 0 15 11"><path d="M0 0 L5.4 0 L6.4 1.6 L14.4 1.6 L14.4 10.6 L0 10.6 Z M0.9 1 L0.9 2.4 L5.2 2.4 L4.7 1 Z" fill="#c4c4c4" fill-rule="evenodd"/></svg>
<div class="t" style="left:40px;top:783.5px;height:20px;line-height:20px;font-size:12px;color:#a4a4a4;">视频过渡</div>
<div style="left:536px;top:501px;width:12px;height:300.5px;background:#1d1d1d;"></div>
<div style="left:537px;top:700px;width:10px;height:100px;background:#343434;border-radius:5px"></div>
<div style="left:548px;top:501px;width:1px;height:300.5px;background:#2a2a2a;"></div>
<svg style="left:494.8px;top:805.5px;" width="14" height="11" viewBox="0 0 14 11"><path d="M0 0 L5 0 L6 1.6 L13.6 1.6 L13.6 10.4 L0 10.4 Z" fill="#c0c0c0"/><path d="M0.8 0.9 L0.8 2.2 L5 2.2 L4.6 0.9Z" fill="#202020"/></svg>
<svg style="left:520.5px;top:805px;" width="10" height="12" viewBox="0 0 10 12"><path d="M0 2.4 H10 M3.4 2 V0.6 H6.6 V2 M1.2 2.8 L1.8 11.4 H8.2 L8.8 2.8 M3.6 4.5 V9.8 M5 4.5 V9.8 M6.4 4.5 V9.8" fill="none" stroke="#5a5a5a" stroke-width="0.9"/></svg>
<div style="left:558px;top:444px;width:48px;height:376.6px;background:#222222;"></div>
<svg style="left:576px;top:458px;" width="15" height="19" viewBox="0 0 15 19"><path d="M0.6 0.6 L13.4 11.4 L5.6 12.4 L0.6 18 Z" fill="#2d8ceb"/></svg>
<svg style="left:572.8px;top:487px;" width="20" height="12" viewBox="0 0 20 12"><rect x="0.9" y="0.9" width="9.6" height="10" fill="none" stroke="#b4b4b4" stroke-width="1.5" stroke-dasharray="2.6 1.7"/><path d="M8.6 4.6 L13 4.6 L13 1.6 L18.6 6 L13 10.4 L13 7.4 L8.6 7.4 Z" fill="#b4b4b4"/></svg>
<svg style="left:573px;top:512.5px;" width="20" height="12" viewBox="0 0 20 12"><rect x="9.2" y="0.9" width="9.6" height="10" fill="none" stroke="#b4b4b4" stroke-width="1.5" stroke-dasharray="2.6 1.7"/><path d="M11 4.6 L6.4 4.6 L6.4 1.6 L0.6 6 L6.4 10.4 L6.4 7.4 L11 7.4 Z" fill="#b4b4b4"/></svg>
<svg style="left:572px;top:537.5px;" width="20" height="14" viewBox="0 0 20 14"><rect x="8.9" y="0" width="2.3" height="14" fill="#b4b4b4"/><path d="M0.2 7 L7.8 2.6 L7.8 11.4 Z M19.8 7 L12.2 2.6 L12.2 11.4 Z" fill="#b4b4b4"/></svg>
<svg style="left:573.5px;top:564px;" width="17" height="13" viewBox="0 0 17 13"><rect x="6" y="0" width="1.4" height="13" fill="#b4b4b4"/><rect x="9.6" y="0" width="1.4" height="13" fill="#b4b4b4"/><path d="M0 3.6 L4.6 0.8 L4.6 2.8 L12.4 2.8 L12.4 0.8 L17 3.6 L12.4 6.4 L12.4 4.6 L4.6 4.6 L4.6 6.4 Z M0 9.4 L4.6 6.6 L4.6 8.6 L12.4 8.6 L12.4 6.6 L17 9.4 L12.4 12.2 L12.4 10.4 L4.6 10.4 L4.6 12.2 Z" fill="#b4b4b4"/></svg>
<svg style="left:573px;top:590px;" width="19" height="15" viewBox="0 0 19 15"><path d="M0 3.4 L4.6 0.4 L4.6 2.6 L7 2.6 L7 4.4 L4.6 4.4 L4.6 6.4 Z M18.4 11 L13.8 8 L13.8 10.2 L9.6 10.2 L9.6 12 L13.8 12 L13.8 14 Z" fill="#b4b4b4"/><path d="M8.4 1 V13.6" stroke="#b4b4b4" stroke-width="1.3" stroke-dasharray="2 1.5"/></svg>
<svg style="left:573.5px;top:615px;" width="17" height="17" viewBox="0 0 17 17"><g transform="rotate(40 8.5 8.5)"><rect x="1" y="4.2" width="15" height="8.6" rx="1" fill="#b4b4b4"/><path d="M5 8.5 L6.4 7 L7.6 8.8 L8.8 7 L10 8.8 L11.4 7.6" fill="none" stroke="#222" stroke-width="1.3"/></g></svg>
<svg style="left:572px;top:642px;" width="20" height="14" viewBox="0 0 20 14"><rect x="0" y="0" width="1.7" height="14" fill="#b4b4b4"/><rect x="18.3" y="0" width="1.7" height="14" fill="#b4b4b4"/><path d="M3.4 7 L7.4 3.8 L7.4 6.2 L12.6 6.2 L12.6 3.8 L16.6 7 L12.6 10.2 L12.6 7.8 L7.4 7.8 L7.4 10.2 Z" fill="#b4b4b4"/></svg>
<svg style="left:572px;top:668.5px;" width="20" height="13" viewBox="0 0 20 13"><path d="M0 6.5 L5.4 3 L5.4 5.6 L14.6 5.6 L14.6 3 L20 6.5 L14.6 10 L14.6 7.4 L5.4 7.4 L5.4 10 Z" fill="#b4b4b4"/><rect x="7.2" y="0.7" width="5.6" height="3.8" fill="none" stroke="#b4b4b4" stroke-width="1.2"/><rect x="7.2" y="8.5" width="5.6" height="3.8" fill="none" stroke="#b4b4b4" stroke-width="1.2"/></svg>
<svg style="left:573.5px;top:692.5px;" width="18" height="17" viewBox="0 0 18 17"><path d="M0.6 16.4 L2.8 8.8 L8.4 4.4 L12.6 8.6 L8.2 14.2 Z" fill="#b4b4b4"/><path d="M9.6 3.4 L12.2 0.8 L16.2 4.8 L13.6 7.4 Z" fill="#b4b4b4"/><path d="M1.2 15.8 L6 11" stroke="#222" stroke-width="1"/><circle cx="6.6" cy="10.4" r="1.1" fill="#222"/></svg>
<svg style="left:574px;top:719px;" width="17" height="17" viewBox="0 0 17 17"><path d="M5.2 9.4 L3.8 3.6 M7.7 8.4 L7.1 1.6 M10.1 8.4 L10.8 2 M12.4 9.6 L13.9 4.4 M5 13.4 L1.4 9.8" fill="none" stroke="#b4b4b4" stroke-width="2.1" stroke-linecap="round"/><path d="M4.2 8.8 L13.4 8.8 C13.8 12 12.6 14.8 11.2 16.5 L6.4 16.5 C4.6 14.6 3.4 12.6 4.2 8.8 Z" fill="#b4b4b4"/></svg>
<svg style="left:573.5px;top:744.5px;" width="18" height="18" viewBox="0 0 18 18"><circle cx="6.6" cy="6.6" r="5.2" fill="none" stroke="#b4b4b4" stroke-width="1.5"/><path d="M10.4 10.4 L16.4 16.4" stroke="#b4b4b4" stroke-width="2.1"/></svg>
<div style="left:610px;top:444px;width:879px;height:376.6px;background:#212121;"></div>
<svg style="left:621px;top:456px;" width="6" height="6" viewBox="0 0 6 6"><path d="M0.5 0.5 L5 5 M5 0.5 L0.5 5" stroke="#9a9a9a" stroke-width="1"/></svg>
<div class="t" style="left:637px;top:447.8px;height:20px;line-height:20px;font-size:11px;color:#bdbdbd;letter-spacing:-0.45px">3.HTML_CSS_JS</div>
<svg style="left:729px;top:454.5px;" width="9" height="8" viewBox="0 0 9 8"><path d="M0 0.8 H8.4 M0 4 H8.4 M0 7.2 H8.4" stroke="#c4c4c4" stroke-width="1.1"/></svg>
<div class="t" style="left:629.9px;top:474.4px;height:22px;line-height:22px;font-size:16.5px;color:#2d8ceb;font-weight:bold">00;00;23;16</div>
<svg style="left:631.5px;top:500px;" width="15" height="15" viewBox="0 0 15 15"><path d="M7.4 0.3 V5.6 M0.6 6.2 H5.4 M0.6 9 H5.4 M9.4 6.2 H14.4 M9.4 9 H14.4 M11.6 2.4 L9 5 M3.2 12.6 L5.8 10 M7.4 10 V14.7" stroke="#2d8ceb" stroke-width="1.5" fill="none"/><path d="M2 1.6 L13.4 13.6" stroke="#2d8ceb" stroke-width="1.1"/></svg>
<svg style="left:666.8px;top:501px;" width="12" height="12" viewBox="0 0 12 12"><path d="M1.7 11.6 L1.7 5.8 A4.3 4.3 0 0 1 10.3 5.8 L10.3 11.6" fill="none" stroke="#2d8ceb" stroke-width="3"/><rect x="0" y="9.4" width="3.4" height="1" fill="#212121"/><rect x="8.6" y="9.4" width="3.4" height="1" fill="#212121"/></svg>
<svg style="left:699.5px;top:500.5px;" width="15" height="14" viewBox="0 0 15 14"><rect x="0.3" y="0.4" width="5" height="4.8" fill="#2d8ceb"/><path d="M6.4 0.4 L14.6 0.4 L14.6 7.8 Z" fill="#2d8ceb"/><path d="M6.2 1.2 L13.8 9.4 L9.8 9.6 L6.2 13.4 Z" fill="#2d8ceb"/><path d="M4.2 7 H1 V11 H4.2" fill="none" stroke="#2d8ceb" stroke-width="1"/></svg>
<svg style="left:737.3px;top:502.8px;" width="9" height="10" viewBox="0 0 9 10"><path d="M0.2 0.2 L8.2 0.2 L8.2 5.2 L4.2 9.2 L0.2 5.2 Z" fill="#b0b0b0"/></svg>
<svg style="left:767.5px;top:499.5px;" width="16" height="16" viewBox="0 0 16 16"><path d="M14.6 13.2 L7.6 6.2 A4 4 0 0 0 2.6 1 L5 3.4 L4.4 5.2 L2.6 5.8 L0.4 3.6 A4 4 0 0 0 5.6 8.4 L12.6 15.2 A1.4 1.4 0 0 0 14.6 13.2 Z" fill="#b4b4b4"/></svg>
<div style="left:847px;top:470px;width:642px;height:50px;overflow:hidden;background:transparent">
<div class="t" style="left:-28.1px;top:14.2px;width:60px;text-align:center;height:20px;line-height:20px;font-size:11px;color:#a2a2a2">00;00;00;00</div>
<div class="t" style="left:54.9px;top:14.2px;width:60px;text-align:center;height:20px;line-height:20px;font-size:11px;color:#a2a2a2">00;04;59;29</div>
<div class="t" style="left:137.9px;top:14.2px;width:60px;text-align:center;height:20px;line-height:20px;font-size:11px;color:#a2a2a2">00;10;00;00</div>
<div class="t" style="left:220.9px;top:14.2px;width:60px;text-align:center;height:20px;line-height:20px;font-size:11px;color:#a2a2a2">00;14;59;29</div>
<div class="t" style="left:303.9px;top:14.2px;width:60px;text-align:center;height:20px;line-height:20px;font-size:11px;color:#a2a2a2">00;20;00;00</div>
<div class="t" style="left:386.9px;top:14.2px;width:60px;text-align:center;height:20px;line-height:20px;font-size:11px;color:#a2a2a2">00;24;59;29</div>
<div class="t" style="left:469.9px;top:14.2px;width:60px;text-align:center;height:20px;line-height:20px;font-size:11px;color:#a2a2a2">00;30;00;00</div>
<div class="t" style="left:552.9px;top:14.2px;width:60px;text-align:center;height:20px;line-height:20px;font-size:11px;color:#a2a2a2">00;34;59;29</div>
<div class="t" style="left:635.9px;top:14.2px;width:60px;text-align:center;height:20px;line-height:20px;font-size:11px;color:#a2a2a2">00;40;00;00</div>
<svg style="left:0;top:0" width="642" height="50" viewBox="0 0 642 50"><path d="M0.70 33.4V44.6M6.23 39.2V44.6M11.77 39.2V44.6M17.30 39.2V44.6M22.83 39.2V44.6M28.37 39.2V44.6M33.90 39.2V44.6M39.43 39.2V44.6M44.97 39.2V44.6M50.50 39.2V44.6M56.03 39.2V44.6M61.57 39.2V44.6M67.10 39.2V44.6M72.63 39.2V44.6M78.17 39.2V44.6M83.70 33.4V44.6M89.23 39.2V44.6M94.77 39.2V44.6M100.30 39.2V44.6M105.83 39.2V44.6M111.37 39.2V44.6M116.90 39.2V44.6M122.43 39.2V44.6M127.97 39.2V44.6M133.50 39.2V44.6M139.03 39.2V44.6M144.57 39.2V44.6M150.10 39.2V44.6M155.63 39.2V44.6M161.17 39.2V44.6M166.70 33.4V44.6M172.23 39.2V44.6M177.77 39.2V44.6M183.30 39.2V44.6M188.83 39.2V44.6M194.37 39.2V44.6M199.90 39.2V44.6M205.43 39.2V44.6M210.97 39.2V44.6M216.50 39.2V44.6M222.03 39.2V44.6M227.57 39.2V44.6M233.10 39.2V44.6M238.63 39.2V44.6M244.17 39.2V44.6M249.70 33.4V44.6M255.23 39.2V44.6M260.77 39.2V44.6M266.30 39.2V44.6M271.83 39.2V44.6M277.37 39.2V44.6M282.90 39.2V44.6M288.43 39.2V44.6M293.96 39.2V44.6M299.50 39.2V44.6M305.03 39.2V44.6M310.56 39.2V44.6M316.10 39.2V44.6M321.63 39.2V44.6M327.16 39.2V44.6M332.70 33.4V44.6M338.23 39.2V44.6M343.76 39.2V44.6M349.30 39.2V44.6M354.83 39.2V44.6M360.36 39.2V44.6M365.90 39.2V44.6M371.43 39.2V44.6M376.96 39.2V44.6M382.50 39.2V44.6M388.03 39.2V44.6M393.56 39.2V44.6M399.10 39.2V44.6M404.63 39.2V44.6M410.16 39.2V44.6M415.70 33.4V44.6M421.23 39.2V44.6M426.76 39.2V44.6M432.30 39.2V44.6M437.83 39.2V44.6M443.36 39.2V44.6M448.90 39.2V44.6M454.43 39.2V44.6M459.96 39.2V44.6M465.50 39.2V44.6M471.03 39.2V44.6M476.56 39.2V44.6M482.10 39.2V44.6M487.63 39.2V44.6M493.16 39.2V44.6M498.70 33.4V44.6M504.23 39.2V44.6M509.76 39.2V44.6M515.30 39.2V44.6M520.83 39.2V44.6M526.36 39.2V44.6M531.90 39.2V44.6M537.43 39.2V44.6M542.96 39.2V44.6M548.50 39.2V44.6M554.03 39.2V44.6M559.56 39.2V44.6M565.10 39.2V44.6M570.63 39.2V44.6M576.16 39.2V44.6M581.70 33.4V44.6M587.23 39.2V44.6M592.76 39.2V44.6M598.30 39.2V44.6M603.83 39.2V44.6M609.36 39.2V44.6M614.90 39.2V44.6M620.43 39.2V44.6M625.96 39.2V44.6M631.50 39.2V44.6M637.03 39.2V44.6" stroke="#646464" stroke-width="1" fill="none"/></svg>
</div>
<div style="left:847px;top:514.8px;width:525px;height:2.4px;background:#eee13c;"></div>
<div style="left:942px;top:473px;width:1px;height:41px;background:#8c8c8c;"></div>
<div style="left:610px;top:579px;width:879px;height:1px;background:#303030;"></div>
<div style="left:610px;top:604px;width:879px;height:1px;background:#303030;"></div>
<div style="left:610px;top:629px;width:879px;height:1px;background:#303030;"></div>
<div style="left:610px;top:654.3px;width:879px;height:1px;background:#343434;"></div>
<div style="left:610px;top:655.3px;width:879px;height:2.9px;background:#1b1b1b;"></div>
<div style="left:610px;top:658.2px;width:879px;height:1px;background:#343434;"></div>
<div style="left:610px;top:683px;width:879px;height:1px;background:#303030;"></div>
<div style="left:610px;top:708px;width:879px;height:1px;background:#303030;"></div>
<div style="left:610px;top:733px;width:879px;height:1px;background:#303030;"></div>
<div style="left:610px;top:758px;width:879px;height:1px;background:#303030;"></div>
<div style="left:610px;top:783px;width:879px;height:1px;background:#303030;"></div>
<div style="left:846.5px;top:518px;width:1px;height:278px;background:#2a2a2a;"></div>
<svg style="left:660.5px;top:585.2px;" width="10" height="11" viewBox="0 0 10 11"><g transform="translate(0.2 1) scale(0.93)"><path d="M1.4 4.8 V3 A2.4 2.4 0 0 1 6.2 3 V3.6" fill="none" stroke="#bdbdbd" stroke-width="1.35"/><rect x="0.4" y="4.6" width="8.4" height="6" fill="#bdbdbd"/><rect x="3.9" y="6.4" width="1.5" height="2.6" fill="#232323"/></g></svg>
<div class="t" style="left:673.2px;width:32px;text-align:center;top:581.7px;height:20px;line-height:20px;font-size:10.5px;color:#b4b4b4">V3</div>
<svg style="left:714.6px;top:586.9px;" width="13" height="10" viewBox="0 0 13 10"><rect x="0.6" y="0.6" width="8.4" height="3.2" rx="0.4" fill="none" stroke="#c0c0c0" stroke-width="1.2"/><rect x="0.6" y="5.6" width="8.4" height="3.2" rx="0.4" fill="none" stroke="#c0c0c0" stroke-width="1.2"/><path d="M9 2.2 H11.4 V7.2 H9" fill="none" stroke="#c0c0c0" stroke-width="1.4"/></svg>
<svg style="left:740.8px;top:587.8px;" width="14" height="9" viewBox="0 0 14 9"><path d="M0.2 4.4 Q6.6 -3 13 4.4 Q6.6 11.6 0.2 4.4 Z" fill="#c4c4c4"/><circle cx="6.6" cy="4.3" r="2.5" fill="#232323"/><circle cx="6.6" cy="4.3" r="1.1" fill="#c4c4c4"/></svg>
<svg style="left:660.5px;top:610.2px;" width="10" height="11" viewBox="0 0 10 11"><g transform="translate(0.2 1) scale(0.93)"><path d="M1.4 4.8 V3 A2.4 2.4 0 0 1 6.2 3 V3.6" fill="none" stroke="#bdbdbd" stroke-width="1.35"/><rect x="0.4" y="4.6" width="8.4" height="6" fill="#bdbdbd"/><rect x="3.9" y="6.4" width="1.5" height="2.6" fill="#232323"/></g></svg>
<div class="t" style="left:673.2px;width:32px;text-align:center;top:606.7px;height:20px;line-height:20px;font-size:10.5px;color:#b4b4b4">V2</div>
<svg style="left:714.6px;top:611.9px;" width="13" height="10" viewBox="0 0 13 10"><rect x="0.6" y="0.6" width="8.4" height="3.2" rx="0.4" fill="none" stroke="#c0c0c0" stroke-width="1.2"/><rect x="0.6" y="5.6" width="8.4" height="3.2" rx="0.4" fill="none" stroke="#c0c0c0" stroke-width="1.2"/><path d="M9 2.2 H11.4 V7.2 H9" fill="none" stroke="#c0c0c0" stroke-width="1.4"/></svg>
<svg style="left:740.8px;top:612.8px;" width="14" height="9" viewBox="0 0 14 9"><path d="M0.2 4.4 Q6.6 -3 13 4.4 Q6.6 11.6 0.2 4.4 Z" fill="#c4c4c4"/><circle cx="6.6" cy="4.3" r="2.5" fill="#232323"/><circle cx="6.6" cy="4.3" r="1.1" fill="#c4c4c4"/></svg>
<svg style="left:660.5px;top:635.6500000000001px;" width="10" height="11" viewBox="0 0 10 11"><g transform="translate(0.2 1) scale(0.93)"><path d="M1.4 4.8 V3 A2.4 2.4 0 0 1 6.2 3 V3.6" fill="none" stroke="#bdbdbd" stroke-width="1.35"/><rect x="0.4" y="4.6" width="8.4" height="6" fill="#bdbdbd"/><rect x="3.9" y="6.4" width="1.5" height="2.6" fill="#232323"/></g></svg>
<div style="left:675px;top:629.6px;width:32.2px;height:24.699999999999932px;background:#085a94;"></div>
<div class="t" style="left:673.2px;width:32px;text-align:center;top:632.1500000000001px;height:20px;line-height:20px;font-size:10.5px;color:#b8dcf6">V1</div>
<svg style="left:714.6px;top:637.35px;" width="13" height="10" viewBox="0 0 13 10"><rect x="0.6" y="0.6" width="8.4" height="3.2" rx="0.4" fill="none" stroke="#c0c0c0" stroke-width="1.2"/><rect x="0.6" y="5.6" width="8.4" height="3.2" rx="0.4" fill="none" stroke="#c0c0c0" stroke-width="1.2"/><path d="M9 2.2 H11.4 V7.2 H9" fill="none" stroke="#c0c0c0" stroke-width="1.4"/></svg>
<svg style="left:740.8px;top:638.25px;" width="14" height="9" viewBox="0 0 14 9"><path d="M0.2 4.4 Q6.6 -3 13 4.4 Q6.6 11.6 0.2 4.4 Z" fill="#c4c4c4"/><circle cx="6.6" cy="4.3" r="2.5" fill="#232323"/><circle cx="6.6" cy="4.3" r="1.1" fill="#c4c4c4"/></svg>
<svg style="left:660.5px;top:664.5px;" width="10" height="11" viewBox="0 0 10 11"><g transform="translate(0.2 1) scale(0.93)"><path d="M1.4 4.8 V3 A2.4 2.4 0 0 1 6.2 3 V3.6" fill="none" stroke="#bdbdbd" stroke-width="1.35"/><rect x="0.4" y="4.6" width="8.4" height="6" fill="#bdbdbd"/><rect x="3.9" y="6.4" width="1.5" height="2.6" fill="#232323"/></g></svg>
<div style="left:675px;top:658.6px;width:32.2px;height:24.399999999999977px;background:#085a94;"></div>
<div class="t" style="left:673.2px;width:32px;text-align:center;top:661.0px;height:20px;line-height:20px;font-size:10.5px;color:#b8dcf6">A1</div>
<svg style="left:714.6px;top:666.1999999999999px;" width="13" height="10" viewBox="0 0 13 10"><rect x="0.6" y="0.6" width="8.4" height="3.2" rx="0.4" fill="none" stroke="#c0c0c0" stroke-width="1.2"/><rect x="0.6" y="5.6" width="8.4" height="3.2" rx="0.4" fill="none" stroke="#c0c0c0" stroke-width="1.2"/><path d="M9 2.2 H11.4 V7.2 H9" fill="none" stroke="#c0c0c0" stroke-width="1.4"/></svg>
<div class="t" style="left:743.6px;top:661.0px;height:20px;line-height:20px;font-size:9.5px;color:#b4b4b4;">M</div>
<div class="t" style="left:771.6px;top:661.0px;height:20px;line-height:20px;font-size:9.5px;color:#b4b4b4;">S</div>
<svg style="left:796.6px;top:664.0px;" width="10" height="14" viewBox="0 0 10 14"><rect x="2.8" y="0.2" width="4" height="8" rx="2" fill="#bdbdbd"/><path d="M0.7 5.6 V6.4 A4.1 4.1 0 0 0 8.9 6.4 V5.6 M4.8 10.6 V13 M2 13.2 H7.6" fill="none" stroke="#bdbdbd" stroke-width="1.1"/></svg>
<svg style="left:660.5px;top:689.5px;" width="10" height="11" viewBox="0 0 10 11"><g transform="translate(0.2 1) scale(0.93)"><path d="M1.4 4.8 V3 A2.4 2.4 0 0 1 6.2 3 V3.6" fill="none" stroke="#bdbdbd" stroke-width="1.35"/><rect x="0.4" y="4.6" width="8.4" height="6" fill="#bdbdbd"/><rect x="3.9" y="6.4" width="1.5" height="2.6" fill="#232323"/></g></svg>
<div style="left:675px;top:683.6px;width:32.2px;height:24.399999999999977px;background:#085a94;"></div>
<div class="t" style="left:673.2px;width:32px;text-align:center;top:686.0px;height:20px;line-height:20px;font-size:10.5px;color:#b8dcf6">A2</div>
<svg style="left:714.6px;top:691.1999999999999px;" width="13" height="10" viewBox="0 0 13 10"><rect x="0.6" y="0.6" width="8.4" height="3.2" rx="0.4" fill="none" stroke="#c0c0c0" stroke-width="1.2"/><rect x="0.6" y="5.6" width="8.4" height="3.2" rx="0.4" fill="none" stroke="#c0c0c0" stroke-width="1.2"/><path d="M9 2.2 H11.4 V7.2 H9" fill="none" stroke="#c0c0c0" stroke-width="1.4"/></svg>
<div class="t" style="left:743.6px;top:686.0px;height:20px;line-height:20px;font-size:9.5px;color:#b4b4b4;">M</div>
<div class="t" style="left:771.6px;top:686.0px;height:20px;line-height:20px;font-size:9.5px;color:#b4b4b4;">S</div>
<svg style="left:796.6px;top:689.0px;" width="10" height="14" viewBox="0 0 10 14"><rect x="2.8" y="0.2" width="4" height="8" rx="2" fill="#bdbdbd"/><path d="M0.7 5.6 V6.4 A4.1 4.1 0 0 0 8.9 6.4 V5.6 M4.8 10.6 V13 M2 13.2 H7.6" fill="none" stroke="#bdbdbd" stroke-width="1.1"/></svg>
<svg style="left:660.5px;top:714.5px;" width="10" height="11" viewBox="0 0 10 11"><g transform="translate(0.2 1) scale(0.93)"><path d="M1.4 4.8 V3 A2.4 2.4 0 0 1 6.2 3 V3.6" fill="none" stroke="#bdbdbd" stroke-width="1.35"/><rect x="0.4" y="4.6" width="8.4" height="6" fill="#bdbdbd"/><rect x="3.9" y="6.4" width="1.5" height="2.6" fill="#232323"/></g></svg>
<div style="left:675px;top:708.6px;width:32.2px;height:24.399999999999977px;background:#085a94;"></div>
<div class="t" style="left:673.2px;width:32px;text-align:center;top:711.0px;height:20px;line-height:20px;font-size:10.5px;color:#b8dcf6">A3</div>
<svg style="left:714.6px;top:716.1999999999999px;" width="13" height="10" viewBox="0 0 13 10"><rect x="0.6" y="0.6" width="8.4" height="3.2" rx="0.4" fill="none" stroke="#c0c0c0" stroke-width="1.2"/><rect x="0.6" y="5.6" width="8.4" height="3.2" rx="0.4" fill="none" stroke="#c0c0c0" stroke-width="1.2"/><path d="M9 2.2 H11.4 V7.2 H9" fill="none" stroke="#c0c0c0" stroke-width="1.4"/></svg>
<div class="t" style="left:743.6px;top:711.0px;height:20px;line-height:20px;font-size:9.5px;color:#b4b4b4;">M</div>
<div class="t" style="left:771.6px;top:711.0px;height:20px;line-height:20px;font-size:9.5px;color:#b4b4b4;">S</div>
<svg style="left:796.6px;top:714.0px;" width="10" height="14" viewBox="0 0 10 14"><rect x="2.8" y="0.2" width="4" height="8" rx="2" fill="#bdbdbd"/><path d="M0.7 5.6 V6.4 A4.1 4.1 0 0 0 8.9 6.4 V5.6 M4.8 10.6 V13 M2 13.2 H7.6" fill="none" stroke="#bdbdbd" stroke-width="1.1"/></svg>
<svg style="left:660.5px;top:739.5px;" width="10" height="11" viewBox="0 0 10 11"><g transform="translate(0.2 1) scale(0.93)"><path d="M1.4 4.8 V3 A2.4 2.4 0 0 1 6.2 3 V3.6" fill="none" stroke="#bdbdbd" stroke-width="1.35"/><rect x="0.4" y="4.6" width="8.4" height="6" fill="#bdbdbd"/><rect x="3.9" y="6.4" width="1.5" height="2.6" fill="#232323"/></g></svg>
<div style="left:675px;top:733.6px;width:32.2px;height:24.399999999999977px;background:#085a94;"></div>
<div class="t" style="left:673.2px;width:32px;text-align:center;top:736.0px;height:20px;line-height:20px;font-size:10.5px;color:#b8dcf6">A4</div>
<svg style="left:714.6px;top:741.1999999999999px;" width="13" height="10" viewBox="0 0 13 10"><rect x="0.6" y="0.6" width="8.4" height="3.2" rx="0.4" fill="none" stroke="#c0c0c0" stroke-width="1.2"/><rect x="0.6" y="5.6" width="8.4" height="3.2" rx="0.4" fill="none" stroke="#c0c0c0" stroke-width="1.2"/><path d="M9 2.2 H11.4 V7.2 H9" fill="none" stroke="#c0c0c0" stroke-width="1.4"/></svg>
<div class="t" style="left:743.6px;top:736.0px;height:20px;line-height:20px;font-size:9.5px;color:#b4b4b4;">M</div>
<div class="t" style="left:771.6px;top:736.0px;height:20px;line-height:20px;font-size:9.5px;color:#b4b4b4;">S</div>
<svg style="left:796.6px;top:739.0px;" width="10" height="14" viewBox="0 0 10 14"><rect x="2.8" y="0.2" width="4" height="8" rx="2" fill="#bdbdbd"/><path d="M0.7 5.6 V6.4 A4.1 4.1 0 0 0 8.9 6.4 V5.6 M4.8 10.6 V13 M2 13.2 H7.6" fill="none" stroke="#bdbdbd" stroke-width="1.1"/></svg>
<svg style="left:660.5px;top:764.2px;" width="10" height="11" viewBox="0 0 10 11"><g transform="translate(0.2 1) scale(0.93)"><path d="M1.4 4.8 V3 A2.4 2.4 0 0 1 6.2 3 V3.6" fill="none" stroke="#bdbdbd" stroke-width="1.35"/><rect x="0.4" y="4.6" width="8.4" height="6" fill="#bdbdbd"/><rect x="3.9" y="6.4" width="1.5" height="2.6" fill="#232323"/></g></svg>
<div class="t" style="left:755.2px;top:761px;height:20px;line-height:20px;font-size:11px;color:#2f7fd6;">0.0</div>
<svg style="left:826.6px;top:761.6px;" width="13" height="11" viewBox="0 0 13 11"><path d="M0.3 0.4 L5.9 4.8 L0.3 9.4 Z M11.8 0.4 L6.2 4.8 L11.8 9.4 Z" fill="#c4c4c4"/></svg>
<div style="left:847px;top:630px;width:524px;height:24px;background:#c9c9c9;"></div>
<svg style="left:847px;top:629.5px;" width="8" height="8" viewBox="0 0 8 8"><path d="M0 5.2 L4.8 0.4" stroke="#3a3a3a" stroke-width="0.9"/></svg>
<svg style="left:1363px;top:629.5px;" width="8" height="8" viewBox="0 0 8 8"><path d="M8 0 H3.6 L8 4.8 Z" fill="#3a3a3a"/><path d="M8 5 L3.2 0.2" stroke="#f0f0f0" stroke-width="0.9"/></svg>
<div style="left:856.5px;top:633px;width:11.2px;height:9.4px;background:#e9b92c;border-radius:1px"></div>
<div class="t" style="left:857.9px;top:629.6px;height:14px;line-height:14px;font-size:11px;font-style:italic;color:#1c1400;letter-spacing:-0.4px;-webkit-text-stroke:0.25px #1c1400">fx</div>
<div class="t" style="left:874.7px;top:626.6px;height:20px;line-height:20px;font-size:11px;color:#161616;"><span style="letter-spacing:-0.26px">3.HTML_CSS_JS.wmv [V]</span><span style="letter-spacing:0.5px"> [150%]</span></div>
<div style="left:849.6px;top:661.6px;width:521.4px;height:18.6px;background:#b4bcc4;border-radius:1px"></div>
<div style="left:850.4px;top:662.5px;width:519px;height:17px;background:#3a5473;"></div>
<svg style="left:850.4px;top:661.5px;" width="519" height="18" viewBox="0 0 519 18"><path d="M0 18 L0.0 16.0 L0.5 16.0 L1.0 16.0 L1.5 16.0 L2.0 16.0 L2.5 16.0 L3.0 16.0 L3.5 16.0 L4.0 14.0 L4.5 14.2 L5.0 14.2 L5.5 14.2 L6.0 14.3 L6.5 13.0 L7.0 9.5 L7.5 14.5 L8.0 12.6 L8.5 13.2 L9.0 13.0 L9.5 12.1 L10.0 13.4 L10.5 12.2 L11.0 13.8 L11.5 12.4 L12.0 14.2 L12.5 10.4 L13.0 12.2 L13.5 13.0 L14.0 12.6 L14.5 13.2 L15.0 13.8 L15.5 13.3 L16.0 12.8 L16.5 8.4 L17.0 12.0 L17.5 9.5 L18.0 11.3 L18.5 13.5 L19.0 11.5 L19.5 9.6 L20.0 13.7 L20.5 13.7 L21.0 9.8 L21.5 15.6 L22.0 12.9 L22.5 15.0 L23.0 13.3 L23.5 13.8 L24.0 12.8 L24.5 12.4 L25.0 11.9 L25.5 13.5 L26.0 13.5 L26.5 12.3 L27.0 13.2 L27.5 12.9 L28.0 13.0 L28.5 14.0 L29.0 13.0 L29.5 13.7 L30.0 12.8 L30.5 13.2 L31.0 12.3 L31.5 9.0 L32.0 12.6 L32.5 9.2 L33.0 13.4 L33.5 12.4 L34.0 13.2 L34.5 13.0 L35.0 13.8 L35.5 13.6 L36.0 13.6 L36.5 14.2 L37.0 11.1 L37.5 13.1 L38.0 13.1 L38.5 13.9 L39.0 14.1 L39.5 13.6 L40.0 13.5 L40.5 13.3 L41.0 13.2 L41.5 12.7 L42.0 13.4 L42.5 11.1 L43.0 15.0 L43.5 14.3 L44.0 8.5 L44.5 13.4 L45.0 13.3 L45.5 14.0 L46.0 14.0 L46.5 10.2 L47.0 14.2 L47.5 9.3 L48.0 12.1 L48.5 10.7 L49.0 14.3 L49.5 12.7 L50.0 14.3 L50.5 14.1 L51.0 13.6 L51.5 13.7 L52.0 11.1 L52.5 13.3 L53.0 14.3 L53.5 15.0 L54.0 16.3 L54.5 14.0 L55.0 8.9 L55.5 12.9 L56.0 13.0 L56.5 13.4 L57.0 13.0 L57.5 12.7 L58.0 12.9 L58.5 12.9 L59.0 13.6 L59.5 14.1 L60.0 12.7 L60.5 13.4 L61.0 11.3 L61.5 13.4 L62.0 15.1 L62.5 12.8 L63.0 14.0 L63.5 13.3 L64.0 13.4 L64.5 14.1 L65.0 14.7 L65.5 13.8 L66.0 14.3 L66.5 13.1 L67.0 12.9 L67.5 12.8 L68.0 9.2 L68.5 12.8 L69.0 9.2 L69.5 13.0 L70.0 14.0 L70.5 14.5 L71.0 14.6 L71.5 14.0 L72.0 13.3 L72.5 11.4 L73.0 12.4 L73.5 11.8 L74.0 13.1 L74.5 13.1 L75.0 15.9 L75.5 10.0 L76.0 11.8 L76.5 13.0 L77.0 10.0 L77.5 13.7 L78.0 12.6 L78.5 12.0 L79.0 12.4 L79.5 13.5 L80.0 9.0 L80.5 13.6 L81.0 12.5 L81.5 13.0 L82.0 13.3 L82.5 10.3 L83.0 12.8 L83.5 12.9 L84.0 12.0 L84.5 12.2 L85.0 13.9 L85.5 12.8 L86.0 10.1 L86.5 13.6 L87.0 12.4 L87.5 13.1 L88.0 12.1 L88.5 13.5 L89.0 12.7 L89.5 14.0 L90.0 13.9 L90.5 13.0 L91.0 13.0 L91.5 14.0 L92.0 14.4 L92.5 13.1 L93.0 13.7 L93.5 12.5 L94.0 10.3 L94.5 14.3 L95.0 12.4 L95.5 12.0 L96.0 12.2 L96.5 12.1 L97.0 14.1 L97.5 13.4 L98.0 11.8 L98.5 11.8 L99.0 12.9 L99.5 10.7 L100.0 11.9 L100.5 12.4 L101.0 11.7 L101.5 13.3 L102.0 13.4 L102.5 13.0 L103.0 14.4 L103.5 12.4 L104.0 11.7 L104.5 12.8 L105.0 13.4 L105.5 13.9 L106.0 14.0 L106.5 13.9 L107.0 14.5 L107.5 13.1 L108.0 14.0 L108.5 8.7 L109.0 12.7 L109.5 13.3 L110.0 14.1 L110.5 14.0 L111.0 11.1 L111.5 12.6 L112.0 9.5 L112.5 12.5 L113.0 12.9 L113.5 13.3 L114.0 13.0 L114.5 14.9 L115.0 12.4 L115.5 13.7 L116.0 12.5 L116.5 13.3 L117.0 12.3 L117.5 12.1 L118.0 12.3 L118.5 13.3 L119.0 12.5 L119.5 12.6 L120.0 12.0 L120.5 10.6 L121.0 13.3 L121.5 13.0 L122.0 14.0 L122.5 13.1 L123.0 12.6 L123.5 9.2 L124.0 13.6 L124.5 13.4 L125.0 13.9 L125.5 12.3 L126.0 14.0 L126.5 12.4 L127.0 13.0 L127.5 13.5 L128.0 14.2 L128.5 14.8 L129.0 14.4 L129.5 12.4 L130.0 14.6 L130.5 13.6 L131.0 13.5 L131.5 10.8 L132.0 14.2 L132.5 14.2 L133.0 13.9 L133.5 13.9 L134.0 10.1 L134.5 13.1 L135.0 12.1 L135.5 14.1 L136.0 13.8 L136.5 14.1 L137.0 12.7 L137.5 11.8 L138.0 13.3 L138.5 12.3 L139.0 13.4 L139.5 13.5 L140.0 14.0 L140.5 14.1 L141.0 14.0 L141.5 9.7 L142.0 12.6 L142.5 13.0 L143.0 12.7 L143.5 13.9 L144.0 14.1 L144.5 11.4 L145.0 11.1 L145.5 15.9 L146.0 14.3 L146.5 15.2 L147.0 12.3 L147.5 13.3 L148.0 13.8 L148.5 9.4 L149.0 13.0 L149.5 9.6 L150.0 13.3 L150.5 13.8 L151.0 14.6 L151.5 13.9 L152.0 13.9 L152.5 15.4 L153.0 13.0 L153.5 13.5 L154.0 13.7 L154.5 15.8 L155.0 14.3 L155.5 13.6 L156.0 13.0 L156.5 14.1 L157.0 14.5 L157.5 13.4 L158.0 14.8 L158.5 14.8 L159.0 14.9 L159.5 11.7 L160.0 13.6 L160.5 14.4 L161.0 14.2 L161.5 12.8 L162.0 9.2 L162.5 10.4 L163.0 10.4 L163.5 12.5 L164.0 13.4 L164.5 14.3 L165.0 9.4 L165.5 13.3 L166.0 12.7 L166.5 13.0 L167.0 12.6 L167.5 12.9 L168.0 13.5 L168.5 14.5 L169.0 14.2 L169.5 13.2 L170.0 13.5 L170.5 13.1 L171.0 12.1 L171.5 12.0 L172.0 12.0 L172.5 14.9 L173.0 12.5 L173.5 14.2 L174.0 13.3 L174.5 14.1 L175.0 13.0 L175.5 14.0 L176.0 11.0 L176.5 12.1 L177.0 11.8 L177.5 9.5 L178.0 14.1 L178.5 13.8 L179.0 13.9 L179.5 13.7 L180.0 13.1 L180.5 12.6 L181.0 8.2 L181.5 13.1 L182.0 14.2 L182.5 13.1 L183.0 13.4 L183.5 12.3 L184.0 13.5 L184.5 13.5 L185.0 12.7 L185.5 13.1 L186.0 14.4 L186.5 14.1 L187.0 14.0 L187.5 13.7 L188.0 12.9 L188.5 9.4 L189.0 10.2 L189.5 10.1 L190.0 13.4 L190.5 13.2 L191.0 13.5 L191.5 16.0 L192.0 9.6 L192.5 12.1 L193.0 12.6 L193.5 13.7 L194.0 14.5 L194.5 13.5 L195.0 10.3 L195.5 12.8 L196.0 12.7 L196.5 13.5 L197.0 12.7 L197.5 12.5 L198.0 14.0 L198.5 12.5 L199.0 13.3 L199.5 13.0 L200.0 12.1 L200.5 11.9 L201.0 10.0 L201.5 12.2 L202.0 11.8 L202.5 12.0 L203.0 12.6 L203.5 12.4 L204.0 13.5 L204.5 14.3 L205.0 14.9 L205.5 13.7 L206.0 14.1 L206.5 13.6 L207.0 15.2 L207.5 12.8 L208.0 12.8 L208.5 13.2 L209.0 12.5 L209.5 8.7 L210.0 12.1 L210.5 13.0 L211.0 12.6 L211.5 13.2 L212.0 12.9 L212.5 13.7 L213.0 13.2 L213.5 10.9 L214.0 12.3 L214.5 13.0 L215.0 13.8 L215.5 14.2 L216.0 13.2 L216.5 13.9 L217.0 12.7 L217.5 12.0 L218.0 11.2 L218.5 13.8 L219.0 15.1 L219.5 13.4 L220.0 12.5 L220.5 8.5 L221.0 13.3 L221.5 12.3 L222.0 12.6 L222.5 13.8 L223.0 13.9 L223.5 13.6 L224.0 14.0 L224.5 13.5 L225.0 12.7 L225.5 13.3 L226.0 12.9 L226.5 13.4 L227.0 14.4 L227.5 12.8 L228.0 13.6 L228.5 13.2 L229.0 12.3 L229.5 12.3 L230.0 12.2 L230.5 13.0 L231.0 13.8 L231.5 13.2 L232.0 12.5 L232.5 13.2 L233.0 13.3 L233.5 14.4 L234.0 13.1 L234.5 10.8 L235.0 12.2 L235.5 9.5 L236.0 12.6 L236.5 16.0 L237.0 11.1 L237.5 15.0 L238.0 12.9 L238.5 13.9 L239.0 13.6 L239.5 12.5 L240.0 13.0 L240.5 8.2 L241.0 13.5 L241.5 15.1 L242.0 13.6 L242.5 13.6 L243.0 12.4 L243.5 8.7 L244.0 12.4 L244.5 11.7 L245.0 12.7 L245.5 13.1 L246.0 12.2 L246.5 13.7 L247.0 13.2 L247.5 14.2 L248.0 13.0 L248.5 12.3 L249.0 12.8 L249.5 11.6 L250.0 11.3 L250.5 11.6 L251.0 12.7 L251.5 9.2 L252.0 13.6 L252.5 12.6 L253.0 12.9 L253.5 12.4 L254.0 13.0 L254.5 13.2 L255.0 8.7 L255.5 11.1 L256.0 11.8 L256.5 12.8 L257.0 12.0 L257.5 11.8 L258.0 11.6 L258.5 12.1 L259.0 8.5 L259.5 13.0 L260.0 12.9 L260.5 12.6 L261.0 13.6 L261.5 12.1 L262.0 12.8 L262.5 13.9 L263.0 13.5 L263.5 12.6 L264.0 13.3 L264.5 14.0 L265.0 15.0 L265.5 16.1 L266.0 10.5 L266.5 13.1 L267.0 15.8 L267.5 12.8 L268.0 13.3 L268.5 12.6 L269.0 8.8 L269.5 11.2 L270.0 10.8 L270.5 9.8 L271.0 12.4 L271.5 13.1 L272.0 13.4 L272.5 10.4 L273.0 13.6 L273.5 8.5 L274.0 9.5 L274.5 14.0 L275.0 14.6 L275.5 13.4 L276.0 14.1 L276.5 14.2 L277.0 13.3 L277.5 10.3 L278.0 9.2 L278.5 12.3 L279.0 13.7 L279.5 14.3 L280.0 10.8 L280.5 14.2 L281.0 10.2 L281.5 12.7 L282.0 14.8 L282.5 12.1 L283.0 14.4 L283.5 13.8 L284.0 11.2 L284.5 10.3 L285.0 15.0 L285.5 11.3 L286.0 13.7 L286.5 13.7 L287.0 14.2 L287.5 14.5 L288.0 14.2 L288.5 13.7 L289.0 12.9 L289.5 13.3 L290.0 12.6 L290.5 9.2 L291.0 11.5 L291.5 11.9 L292.0 13.3 L292.5 9.9 L293.0 12.8 L293.5 13.4 L294.0 13.0 L294.5 13.0 L295.0 13.6 L295.5 12.4 L296.0 9.3 L296.5 12.6 L297.0 11.9 L297.5 13.1 L298.0 14.0 L298.5 13.4 L299.0 13.9 L299.5 13.5 L300.0 13.7 L300.5 13.5 L301.0 14.4 L301.5 14.4 L302.0 14.4 L302.5 12.0 L303.0 11.0 L303.5 10.9 L304.0 10.2 L304.5 12.3 L305.0 11.9 L305.5 11.9 L306.0 11.7 L306.5 14.6 L307.0 12.9 L307.5 12.8 L308.0 12.1 L308.5 12.6 L309.0 13.3 L309.5 13.4 L310.0 12.6 L310.5 14.6 L311.0 8.9 L311.5 12.4 L312.0 13.3 L312.5 11.3 L313.0 12.9 L313.5 11.9 L314.0 12.0 L314.5 12.2 L315.0 12.9 L315.5 12.8 L316.0 12.1 L316.5 12.6 L317.0 13.1 L317.5 13.8 L318.0 14.6 L318.5 12.5 L319.0 12.5 L319.5 12.7 L320.0 12.4 L320.5 12.4 L321.0 11.6 L321.5 13.3 L322.0 14.0 L322.5 12.9 L323.0 12.9 L323.5 11.6 L324.0 12.4 L324.5 12.9 L325.0 10.3 L325.5 13.7 L326.0 14.0 L326.5 14.0 L327.0 14.6 L327.5 13.0 L328.0 9.3 L328.5 13.8 L329.0 13.9 L329.5 13.6 L330.0 13.6 L330.5 13.8 L331.0 13.6 L331.5 13.7 L332.0 10.4 L332.5 12.0 L333.0 14.2 L333.5 10.7 L334.0 14.9 L334.5 10.6 L335.0 10.2 L335.5 13.0 L336.0 12.1 L336.5 9.1 L337.0 11.9 L337.5 12.9 L338.0 9.4 L338.5 13.1 L339.0 12.7 L339.5 11.5 L340.0 14.6 L340.5 13.6 L341.0 14.4 L341.5 14.7 L342.0 14.2 L342.5 13.5 L343.0 14.0 L343.5 14.0 L344.0 13.2 L344.5 13.7 L345.0 12.4 L345.5 12.7 L346.0 11.6 L346.5 14.2 L347.0 13.3 L347.5 14.5 L348.0 14.0 L348.5 12.1 L349.0 13.3 L349.5 14.1 L350.0 13.2 L350.5 14.0 L351.0 12.7 L351.5 12.2 L352.0 13.5 L352.5 14.8 L353.0 14.2 L353.5 14.3 L354.0 13.5 L354.5 14.3 L355.0 15.9 L355.5 13.6 L356.0 13.3 L356.5 13.6 L357.0 14.2 L357.5 13.0 L358.0 13.8 L358.5 13.6 L359.0 14.2 L359.5 13.8 L360.0 11.9 L360.5 14.7 L361.0 9.6 L361.5 10.2 L362.0 15.5 L362.5 13.1 L363.0 12.8 L363.5 10.0 L364.0 13.9 L364.5 14.4 L365.0 12.2 L365.5 13.3 L366.0 13.5 L366.5 13.7 L367.0 12.5 L367.5 11.9 L368.0 10.3 L368.5 14.5 L369.0 11.2 L369.5 15.0 L370.0 12.5 L370.5 13.2 L371.0 13.3 L371.5 12.9 L372.0 13.7 L372.5 13.5 L373.0 13.6 L373.5 12.5 L374.0 11.8 L374.5 13.2 L375.0 13.6 L375.5 13.5 L376.0 14.0 L376.5 14.4 L377.0 13.3 L377.5 13.2 L378.0 14.0 L378.5 9.5 L379.0 14.2 L379.5 13.8 L380.0 10.6 L380.5 15.0 L381.0 13.0 L381.5 8.0 L382.0 13.6 L382.5 14.1 L383.0 9.9 L383.5 10.3 L384.0 13.7 L384.5 12.6 L385.0 12.7 L385.5 13.6 L386.0 12.8 L386.5 13.7 L387.0 13.7 L387.5 13.6 L388.0 14.2 L388.5 14.3 L389.0 13.1 L389.5 15.0 L390.0 14.1 L390.5 14.4 L391.0 13.5 L391.5 15.4 L392.0 13.4 L392.5 12.4 L393.0 8.8 L393.5 12.7 L394.0 13.1 L394.5 11.8 L395.0 13.5 L395.5 14.4 L396.0 14.9 L396.5 11.8 L397.0 14.8 L397.5 14.0 L398.0 9.6 L398.5 12.0 L399.0 12.1 L399.5 11.9 L400.0 12.0 L400.5 11.9 L401.0 12.7 L401.5 13.8 L402.0 12.5 L402.5 13.3 L403.0 9.9 L403.5 13.8 L404.0 12.2 L404.5 13.3 L405.0 13.5 L405.5 11.2 L406.0 14.1 L406.5 10.2 L407.0 13.8 L407.5 13.8 L408.0 13.8 L408.5 14.2 L409.0 13.5 L409.5 11.9 L410.0 12.1 L410.5 11.6 L411.0 11.6 L411.5 12.7 L412.0 13.3 L412.5 13.2 L413.0 9.0 L413.5 9.0 L414.0 12.9 L414.5 13.9 L415.0 13.5 L415.5 13.0 L416.0 12.5 L416.5 12.2 L417.0 12.0 L417.5 12.9 L418.0 11.1 L418.5 12.9 L419.0 13.6 L419.5 11.4 L420.0 14.4 L420.5 11.1 L421.0 11.0 L421.5 13.1 L422.0 13.4 L422.5 15.1 L423.0 14.4 L423.5 10.1 L424.0 12.2 L424.5 13.1 L425.0 13.3 L425.5 12.6 L426.0 11.8 L426.5 13.0 L427.0 13.6 L427.5 13.8 L428.0 9.3 L428.5 13.0 L429.0 13.6 L429.5 14.6 L430.0 12.1 L430.5 8.6 L431.0 10.2 L431.5 12.1 L432.0 9.6 L432.5 8.9 L433.0 11.3 L433.5 14.1 L434.0 15.2 L434.5 14.3 L435.0 14.7 L435.5 13.1 L436.0 12.1 L436.5 11.2 L437.0 13.0 L437.5 9.9 L438.0 13.2 L438.5 12.1 L439.0 12.7 L439.5 11.8 L440.0 9.3 L440.5 11.8 L441.0 12.8 L441.5 12.1 L442.0 13.5 L442.5 13.0 L443.0 8.4 L443.5 12.4 L444.0 13.3 L444.5 13.5 L445.0 13.3 L445.5 13.6 L446.0 14.0 L446.5 12.7 L447.0 12.8 L447.5 13.7 L448.0 13.4 L448.5 10.0 L449.0 13.3 L449.5 10.1 L450.0 10.5 L450.5 13.3 L451.0 14.0 L451.5 12.1 L452.0 12.5 L452.5 13.5 L453.0 13.3 L453.5 14.0 L454.0 11.6 L454.5 13.7 L455.0 9.5 L455.5 13.5 L456.0 14.0 L456.5 13.4 L457.0 13.5 L457.5 13.6 L458.0 12.5 L458.5 12.3 L459.0 9.3 L459.5 13.0 L460.0 9.4 L460.5 12.8 L461.0 13.0 L461.5 13.0 L462.0 12.7 L462.5 13.9 L463.0 13.4 L463.5 14.1 L464.0 14.4 L464.5 14.0 L465.0 13.0 L465.5 13.0 L466.0 8.1 L466.5 13.3 L467.0 12.5 L467.5 10.8 L468.0 12.3 L468.5 10.4 L469.0 13.3 L469.5 13.5 L470.0 13.1 L470.5 12.6 L471.0 13.2 L471.5 13.6 L472.0 13.2 L472.5 14.2 L473.0 10.1 L473.5 13.7 L474.0 12.8 L474.5 12.5 L475.0 7.8 L475.5 9.6 L476.0 13.4 L476.5 12.5 L477.0 8.3 L477.5 13.2 L478.0 8.8 L478.5 8.5 L479.0 10.5 L479.5 14.5 L480.0 12.9 L480.5 15.6 L481.0 12.4 L481.5 13.2 L482.0 14.1 L482.5 12.3 L483.0 11.6 L483.5 12.6 L484.0 13.8 L484.5 13.9 L485.0 14.5 L485.5 16.1 L486.0 12.5 L486.5 13.2 L487.0 15.5 L487.5 14.6 L488.0 14.6 L488.5 12.8 L489.0 12.3 L489.5 9.0 L490.0 14.2 L490.5 13.9 L491.0 11.9 L491.5 15.4 L492.0 13.3 L492.5 12.8 L493.0 14.5 L493.5 13.4 L494.0 14.2 L494.5 13.5 L495.0 14.3 L495.5 9.6 L496.0 12.2 L496.5 14.5 L497.0 13.5 L497.5 13.2 L498.0 13.5 L498.5 13.7 L499.0 12.9 L499.5 12.3 L500.0 12.4 L500.5 13.3 L501.0 8.3 L501.5 8.4 L502.0 11.8 L502.5 11.6 L503.0 11.5 L503.5 12.6 L504.0 7.5 L504.5 12.9 L505.0 13.6 L505.5 13.4 L506.0 12.8 L506.5 12.3 L507.0 13.2 L507.5 11.7 L508.0 12.5 L508.5 9.3 L509.0 12.9 L509.5 13.6 L510.0 13.7 L510.5 12.7 L511.0 10.5 L511.5 13.2 L512.0 13.5 L512.5 13.1 L513.0 13.1 L513.5 12.0 L514.0 13.5 L514.5 12.2 L515.0 14.2 L515.5 12.3 L516.0 11.7 L516.5 13.2 L517.0 12.2 L517.5 12.2 L518.0 12.2 L518.5 14.5 L519.0 12.6 L519.5 12.2 L520.0 11.8 L520 18 Z" fill="#c8caca"/></svg>
<svg style="left:847px;top:658.6px;" width="8" height="8" viewBox="0 0 8 8"><path d="M0 5.4 L5 0.4" stroke="#d4d4d4" stroke-width="1"/></svg>
<svg style="left:1363.4px;top:658.6px;" width="8" height="8" viewBox="0 0 8 8"><path d="M7.6 6.8 L1.2 0.4" stroke="#e0e0e0" stroke-width="0.9"/></svg>
<div style="left:856.3px;top:662.8px;width:11.2px;height:9.4px;background:#e9b92c;border-radius:1px"></div>
<div class="t" style="left:857.6999999999999px;top:659.4px;height:14px;line-height:14px;font-size:11px;font-style:italic;color:#1c1400;letter-spacing:-0.4px;-webkit-text-stroke:0.25px #1c1400">fx</div>
<div style="left:853px;top:510px;width:1.3px;height:286px;background:#3d8de6;"></div>
<svg style="left:847.7px;top:503px;" width="12" height="12" viewBox="0 0 12 12"><path d="M0 0.2 L11.2 0.2 L11.2 6.6 L6.4 11.4 L4.8 11.4 L0 6.6 Z" fill="#2f95fb"/></svg>
<svg style="left:934px;top:672.5px;" width="12" height="12" viewBox="0 0 12 12"><circle cx="5.6" cy="6.6" r="4.4" fill="#e4e4e4"/><path d="M1.2 7.2 A4.4 4.6 0 0 1 10 7.2 Z" fill="#3a3532"/><rect x="3.2" y="0.8" width="4.8" height="2.6" fill="#d8d8d8"/></svg>
<svg style="left:942.5px;top:683px;" width="10" height="10" viewBox="0 0 10 10"><path d="M3.4 0.6 H6 V3.4 H8.8 V6 H6 V8.8 H3.4 V6 H0.6 V3.4 H3.4 Z" fill="#111" stroke="#e8e8e8" stroke-width="0.9"/></svg>
<div style="left:629px;top:797.3px;width:860px;height:10.6px;background:#323232;"></div>
<div style="left:623.6px;top:797.5px;width:5.8px;height:5.8px;border:2.4px solid #a6a6a6;border-radius:50%;background:#222"></div>
<div style="left:0px;top:822.5px;width:1489px;height:17px;background:#212121;"></div>
<svg style="left:-4px;top:824px;" width="14" height="14" viewBox="0 0 14 14"><circle cx="6" cy="7" r="5.2" fill="none" stroke="#a8a8a8" stroke-width="1.1"/><path d="M3.6 6.4 A2.6 2.6 0 1 1 6 9.6" fill="none" stroke="#a8a8a8" stroke-width="1"/></svg>
<div class="t" style="left:26.8px;top:824px;height:20px;line-height:20px;font-size:12px;color:#a4a4a4;letter-spacing:0.1px">拖放到剪辑上以显示效果。</div>
<div style="left:0px;top:0px;width:1489px;height:1px;background:#ececec;"></div>
</div></body></html>
